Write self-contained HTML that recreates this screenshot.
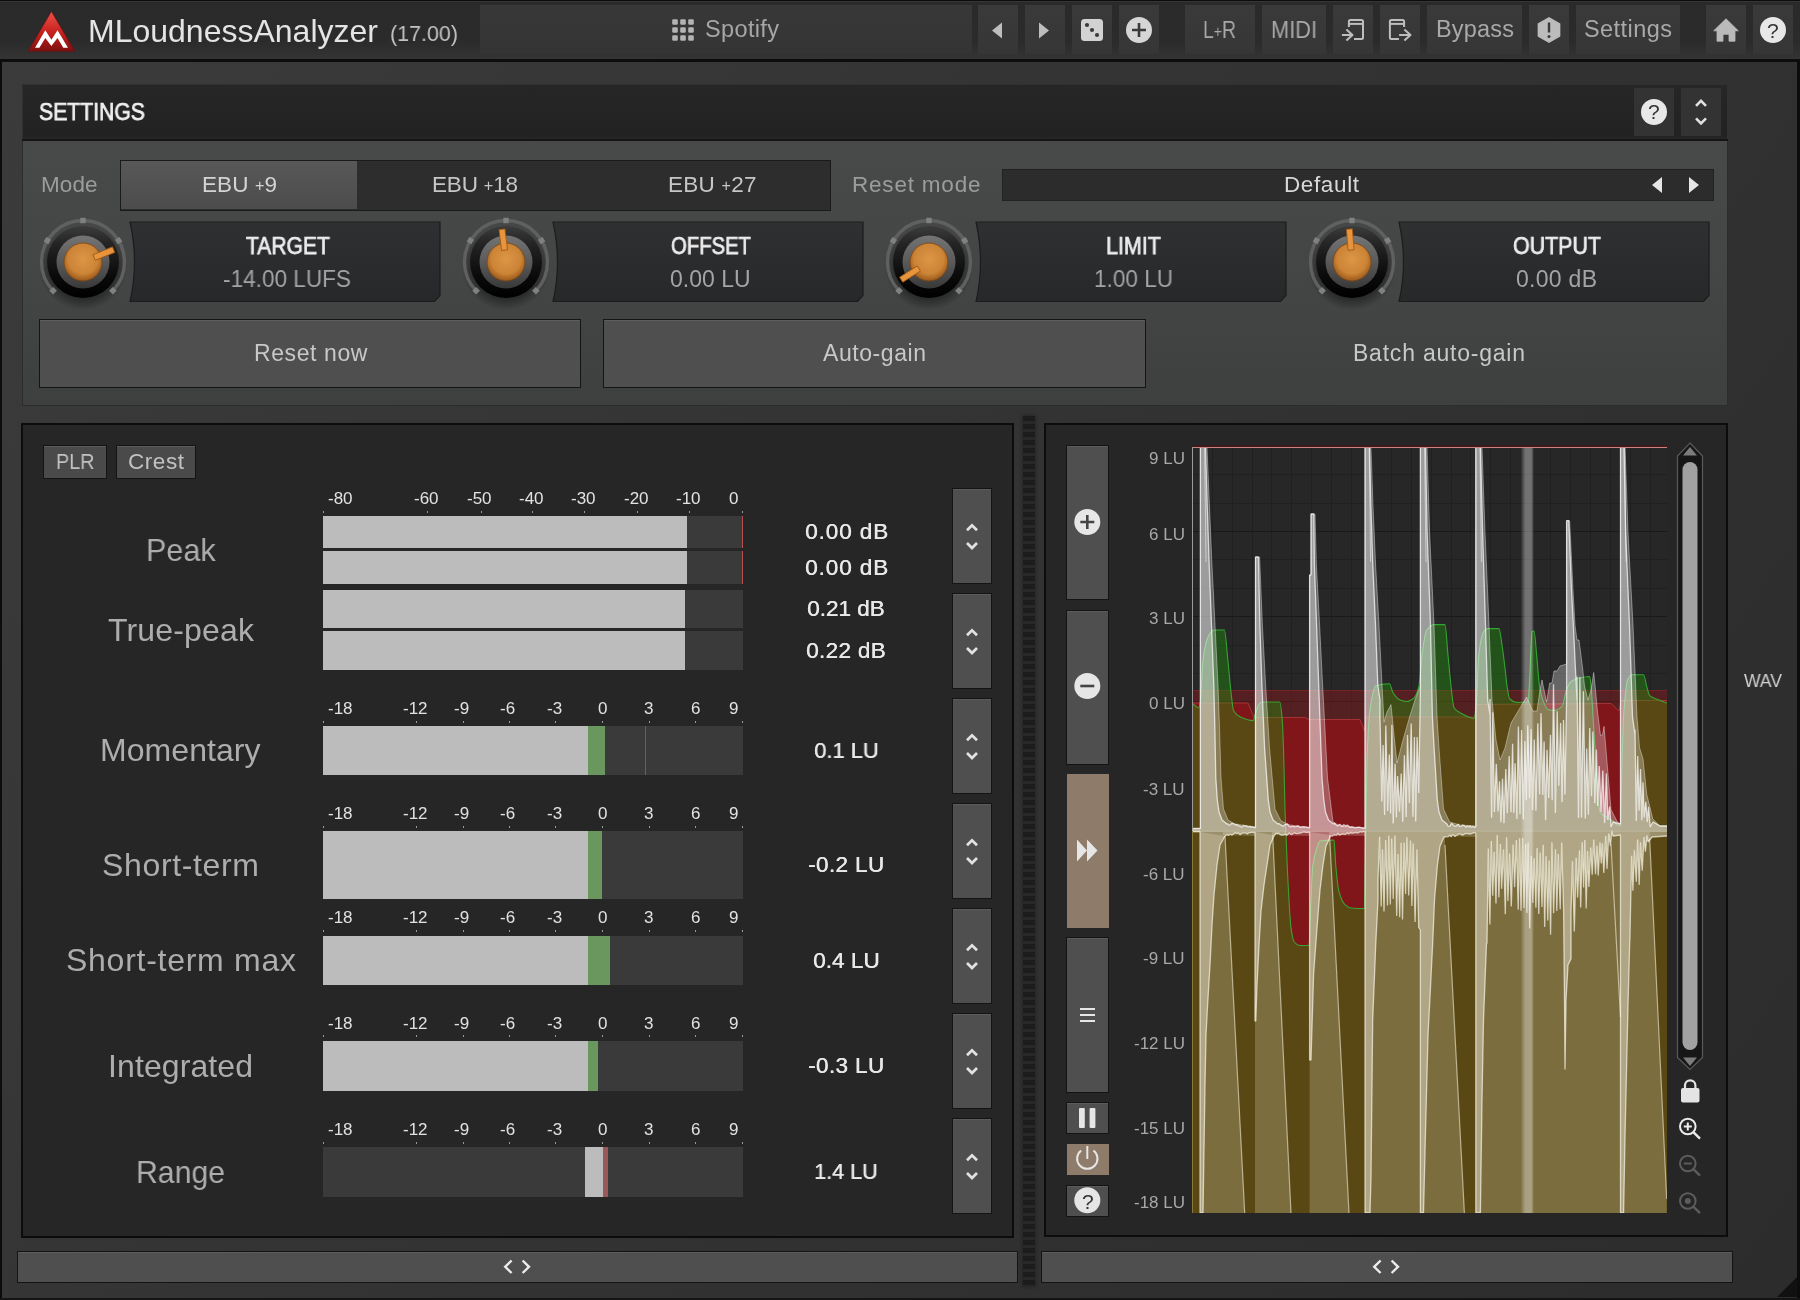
<!DOCTYPE html><html><head><meta charset="utf-8"><title>MLoudnessAnalyzer</title><style>
html,body{margin:0;padding:0}body{width:1800px;height:1300px;position:relative;overflow:hidden;background:#343434;font-family:"Liberation Sans", sans-serif;-webkit-font-smoothing:antialiased;}
body>div{will-change:transform}
.btn{position:absolute;background:#4f4f4f;border:1px solid #141414;box-sizing:border-box;box-shadow:inset 0 1px 0 #5c5c5c}
.tb{position:absolute;top:5px;height:49px;background:linear-gradient(#3a3a3a,#363636)}
</style></head><body>
<div style="position:absolute;left:0.0px;top:0.0px;width:1800.0px;height:1300.0px;background:#0c0c0c;"></div>
<div style="position:absolute;left:2.0px;top:62.0px;width:1795.0px;height:1236.0px;background:linear-gradient(125deg,#3b3b3b 0%,#343434 40%,#2c2c2c 100%);"></div>
<div style="position:absolute;left:0.0px;top:0.0px;width:1800.0px;height:59.0px;background:linear-gradient(#2a2a2a 0%,#2b2b2b 70%,#343434 100%);"></div>
<div style="position:absolute;left:0.0px;top:0.0px;width:1800.0px;height:1.2px;background:#0c0c0c;"></div>
<div style="position:absolute;left:0.0px;top:1.2px;width:1800.0px;height:1.0px;background:#363636;"></div>
<div style="position:absolute;left:0.0px;top:58.6px;width:1800.0px;height:3.4px;background:#0d0d0d;"></div>
<svg style="position:absolute;left:24.0px;top:8.0px" width="56.0" height="48.0" viewBox="0 0 56.0 48.0">
<defs><linearGradient id="lg" x1="0" y1="0" x2="0" y2="1"><stop offset="0" stop-color="#f0504a"/><stop offset="0.55" stop-color="#c4201c"/><stop offset="1" stop-color="#7c1010"/></linearGradient></defs>
<path d="M27.4,3.4 L50.9,43.3 L4.1,43.3 Z" fill="url(#lg)" stroke="#6a0e0e" stroke-width="0.8" stroke-opacity="0.7" stroke-linejoin="round"/>
<path d="M11,39.8 L21.3,22.3 L27.4,31.7 L33.5,22.3 L44,39.8 L39.3,39.8 L33.5,30 L27.4,38.1 L21.3,30 L15.4,39.8 Z" fill="#fff"/>
</svg>
<div style="position:absolute;left:88.0px;top:14.9px;font-size:32.0px;line-height:32.0px;color:#e4e4e4;white-space:nowrap;">MLoudnessAnalyzer</div>
<div style="position:absolute;left:390.0px;top:23.0px;font-size:22.5px;line-height:22.5px;color:#c4c4c4;white-space:nowrap;transform:scaleX(0.9538);transform-origin:0 0;">(17.00)</div>
<div class="tb" style="left:480px;width:492px;background:linear-gradient(#383838,#343434)"></div>
<svg style="position:absolute;left:672.0px;top:19.0px" width="22.0" height="22.0" viewBox="0 0 22.0 22.0">
<rect x="0.2" y="0.2" width="5.6" height="5.6" rx="1.3" fill="#b4b4b4"/>
<rect x="8.2" y="0.2" width="5.6" height="5.6" rx="1.3" fill="#b4b4b4"/>
<rect x="16.2" y="0.2" width="5.6" height="5.6" rx="1.3" fill="#b4b4b4"/>
<rect x="0.2" y="8.2" width="5.6" height="5.6" rx="1.3" fill="#b4b4b4"/>
<rect x="8.2" y="8.2" width="5.6" height="5.6" rx="1.3" fill="#b4b4b4"/>
<rect x="16.2" y="8.2" width="5.6" height="5.6" rx="1.3" fill="#b4b4b4"/>
<rect x="0.2" y="16.2" width="5.6" height="5.6" rx="1.3" fill="#b4b4b4"/>
<rect x="8.2" y="16.2" width="5.6" height="5.6" rx="1.3" fill="#b4b4b4"/>
<rect x="16.2" y="16.2" width="5.6" height="5.6" rx="1.3" fill="#b4b4b4"/>
</svg>
<div style="position:absolute;left:705.0px;top:18.1px;font-size:23.5px;line-height:23.5px;color:#a6a6a6;white-space:nowrap;letter-spacing:0.36px;">Spotify</div>
<div class="tb" style="left:978px;width:40px"></div>
<div class="tb" style="left:1025px;width:40px"></div>
<div class="tb" style="left:1072px;width:40px"></div>
<div class="tb" style="left:1119px;width:40px"></div>
<div class="tb" style="left:1185px;width:70px"></div>
<div class="tb" style="left:1262px;width:64px"></div>
<div class="tb" style="left:1333px;width:40px"></div>
<div class="tb" style="left:1380px;width:40px"></div>
<div class="tb" style="left:1427px;width:95px"></div>
<div class="tb" style="left:1529px;width:40px"></div>
<div class="tb" style="left:1576px;width:104px"></div>
<div class="tb" style="left:1706px;width:40px"></div>
<div class="tb" style="left:1753px;width:40px"></div>
<svg style="position:absolute;left:978.0px;top:5.0px" width="815.0" height="49.0" viewBox="0 0 815.0 49.0">
<path d="M24,17.5 L24,33.5 L14,25.5 Z" fill="#bebebe"/>
<path d="M61,17.5 L61,33.5 L71,25.5 Z" fill="#bebebe"/>
<rect x="103" y="14" width="22" height="22" rx="3.5" fill="#d2d2d2"/>
<circle cx="109" cy="20" r="2.1" fill="#3a3a3a"/><circle cx="114" cy="25" r="2.1" fill="#3a3a3a"/><circle cx="119" cy="30" r="2.1" fill="#3a3a3a"/>
<circle cx="161" cy="25" r="13" fill="#d6d6d6"/><path d="M161,18 V32 M154,25 H168" stroke="#3a3a3a" stroke-width="2.6"/>
<g fill="none" stroke="#bebebe" stroke-width="2" stroke-linejoin="round">
<path d="M370.9,21.9 V16.5 Q370.9,15 372.4,15 H383.5 Q385,15 385,16.5 V32.5 Q385,34 383.5,34 H376"/><path d="M370.9,18.9 H385"/><path d="M363.9,30 H374.2 M368.4,24.5 L374.5,30 L368.4,35.6"/>
<path d="M426.1,21.9 V16.5 Q426.1,15 424.6,15 H413.4 Q411.9,15 411.9,16.5 V32.5 Q411.9,34 413.4,34 H420.9"/><path d="M411.9,18.9 H426.1"/><path d="M421.1,30 H432.2 M426.4,24.5 L432.5,30 L426.4,35.6"/>
</g>
<path d="M571.0,12.8 L581.6,18.9 L581.6,31.1 L571.0,37.2 L560.4,31.1 L560.4,18.9 Z" fill="#bcbcbc" stroke="#bcbcbc" stroke-width="1.5" stroke-linejoin="round"/>
<path d="M571,17.5 V27.5" stroke="#3a3a3a" stroke-width="2.4"/><circle cx="571" cy="31.5" r="1.5" fill="#3a3a3a"/>
<path d="M748,13.8 L760.3,25.8 H757 V36.2 H751 V29.3 H745 V36.2 H739 V25.8 H735.7 Z" fill="#bababa" stroke="#bababa" stroke-width="0.8" stroke-linejoin="round"/>
<circle cx="795" cy="25" r="13" fill="#e8e8e8"/>
</svg>
<div style="position:absolute;left:1767.2px;top:19.8px;font-size:21.0px;line-height:21.0px;color:#333;white-space:nowrap;">?</div>
<div style="position:absolute;left:1203.0px;top:18.5px;font-size:23.0px;line-height:23.0px;color:#a9a9a9;white-space:nowrap;transform:scaleX(0.8446);transform-origin:0 0;">L<span style="font-size:0.72em;position:relative;top:-0.07em">+</span>R</div>
<div style="position:absolute;left:1271.0px;top:18.5px;font-size:23.0px;line-height:23.0px;color:#a9a9a9;white-space:nowrap;transform:scaleX(0.9475);transform-origin:0 0;">MIDI</div>
<div style="position:absolute;left:1436.0px;top:18.1px;font-size:23.5px;line-height:23.5px;color:#a9a9a9;white-space:nowrap;letter-spacing:0.19px;">Bypass</div>
<div style="position:absolute;left:1584.0px;top:18.1px;font-size:23.5px;line-height:23.5px;color:#a9a9a9;white-space:nowrap;letter-spacing:0.44px;">Settings</div>
<div style="position:absolute;left:22.0px;top:84.0px;width:1706.0px;height:56.0px;background:#262626;border:1px solid #313131;box-sizing:border-box;"></div>
<div style="position:absolute;left:23.0px;top:88.0px;width:1704.0px;height:49.0px;background:linear-gradient(#262626,#222222);"></div>
<div style="position:absolute;left:22.0px;top:139.0px;width:1706.0px;height:2.0px;background:#151515;"></div>
<div style="position:absolute;left:22.0px;top:141.0px;width:1706.0px;height:265.0px;background:linear-gradient(180deg,#484a4a 0%,#444646 50%,#3e3f3f 100%);border:1px solid #2c2c2c;border-top:none;box-sizing:border-box;"></div>
<div style="position:absolute;left:39.0px;top:101.1px;font-size:23.5px;line-height:23.5px;color:#f0f0f0;white-space:nowrap;-webkit-text-stroke:0.75px #f0f0f0;transform:scaleX(0.9020);transform-origin:0 0;">SETTINGS</div>
<div style="position:absolute;left:1634.0px;top:88.0px;width:40.0px;height:48.0px;background:#333333;"></div>
<div style="position:absolute;left:1681.0px;top:88.0px;width:40.0px;height:48.0px;background:#333333;"></div>
<svg style="position:absolute;left:1634.0px;top:88.0px" width="90.0" height="48.0" viewBox="0 0 90.0 48.0">
<circle cx="20" cy="24" r="13" fill="#e8e8e8"/>
<path d="M62,17.8 L67,12.8 L72,17.8 M62,30.4 L67,35.4 L72,30.4" fill="none" stroke="#e0e0e0" stroke-width="2.6"/>
</svg>
<div style="position:absolute;left:1648.2px;top:101.4px;font-size:21.0px;line-height:21.0px;color:#333;white-space:nowrap;">?</div>
<div style="position:absolute;left:41.0px;top:174.0px;font-size:22.5px;line-height:22.5px;color:#9c9c9c;white-space:nowrap;letter-spacing:0.07px;">Mode</div>
<div style="position:absolute;left:119.5px;top:159.5px;width:711.0px;height:51.0px;background:#2d2d2d;border:1px solid #1a1a1a;box-sizing:border-box;"></div>
<div style="position:absolute;left:121.0px;top:161.0px;width:236.0px;height:48.0px;background:linear-gradient(#585858,#4c4c4c);"></div>
<div style="position:absolute;left:201.5px;top:174.0px;font-size:22.5px;line-height:22.5px;color:#d4d4d4;white-space:nowrap;letter-spacing:0.10px;">EBU <span style="font-size:0.72em;position:relative;top:-0.07em">+</span>9</div>
<div style="position:absolute;left:432.3px;top:174.0px;font-size:22.5px;line-height:22.5px;color:#c6c6c6;white-space:nowrap;letter-spacing:-0.17px;">EBU <span style="font-size:0.72em;position:relative;top:-0.07em">+</span>18</div>
<div style="position:absolute;left:667.5px;top:174.0px;font-size:22.5px;line-height:22.5px;color:#c6c6c6;white-space:nowrap;letter-spacing:0.25px;">EBU <span style="font-size:0.72em;position:relative;top:-0.07em">+</span>27</div>
<div style="position:absolute;left:852.4px;top:174.0px;font-size:22.5px;line-height:22.5px;color:#9c9c9c;white-space:nowrap;letter-spacing:0.80px;">Reset mode</div>
<div style="position:absolute;left:1002.0px;top:169.0px;width:711.5px;height:32.0px;background:#2c2c2c;border:1px solid #222;box-sizing:border-box;"></div>
<div style="position:absolute;left:1284.0px;top:174.0px;font-size:22.5px;line-height:22.5px;color:#d8d8d8;white-space:nowrap;letter-spacing:0.62px;">Default</div>
<svg style="position:absolute;left:1645.0px;top:172.0px" width="60.0" height="26.0" viewBox="0 0 60.0 26.0">
<path d="M17,5 V21 L7,13 Z M44,5 V21 L54,13 Z" fill="#e6e6e6"/>
</svg>
<svg style="position:absolute;left:128.0px;top:220.0px" width="316.0" height="84.0" viewBox="0 0 316.0 84.0">
<defs><linearGradient id="v130" x1="0" y1="0" x2="0" y2="1"><stop offset="0" stop-color="#2f3032"/><stop offset="1" stop-color="#27282a"/></linearGradient></defs>
<path d="M2,2 H312 V75.5 L306.5,81.5 H2 Q11,42 2,2 Z" fill="url(#v130)" stroke="#1c1c1c" stroke-width="1.2"/>
</svg>
<div style="position:absolute;left:245.5px;top:235.1px;font-size:23.5px;line-height:23.5px;color:#ececec;white-space:nowrap;-webkit-text-stroke:0.75px #ececec;transform:scaleX(0.8960);transform-origin:0 0;">TARGET</div>
<div style="position:absolute;left:223.0px;top:267.5px;font-size:23.0px;line-height:23.0px;color:#a4a4a4;white-space:nowrap;transform:scaleX(0.9816);transform-origin:0 0;">-14.00 LUFS</div>
<svg style="position:absolute;left:33.0px;top:212.0px" width="100.0" height="100.0" viewBox="0 0 100.0 100.0">
<defs><radialGradient id="k83a" cx="0.5" cy="0.42" r="0.6"><stop offset="0" stop-color="#dc9646"/><stop offset="0.65" stop-color="#cc8436"/><stop offset="1" stop-color="#945418"/></radialGradient>
<linearGradient id="k83b" x1="0" y1="0" x2="0" y2="1"><stop offset="0" stop-color="#3c3c3c"/><stop offset="0.25" stop-color="#242424"/><stop offset="0.7" stop-color="#0a0a0a"/><stop offset="1" stop-color="#000"/></linearGradient>
<linearGradient id="k83c" x1="0" y1="0" x2="0" y2="1"><stop offset="0" stop-color="#747474"/><stop offset="0.5" stop-color="#5a5a5a"/><stop offset="1" stop-color="#383838"/></linearGradient>
<radialGradient id="k83d" cx="0.5" cy="0.5" r="0.5"><stop offset="0.6" stop-color="#000" stop-opacity="0.55"/><stop offset="1" stop-color="#000" stop-opacity="0"/></radialGradient></defs>
<ellipse cx="50" cy="56" rx="44" ry="42" fill="url(#k83d)"/>
<path d="M20.1,78.8 A41.5,41.5 0 1 1 79.9,78.8" fill="none" stroke="#606060" stroke-width="3.3"/>
<rect x="17.4" y="76.1" width="5.4" height="5.4" fill="#808080" transform="rotate(-134 20.1 78.8)"/>
<rect x="11.7" y="25.9" width="5.4" height="5.4" fill="#808080" transform="rotate(-59 14.4 28.6)"/>
<rect x="47.3" y="5.8" width="5.4" height="5.4" fill="#808080" transform="rotate(0 50.0 8.5)"/>
<rect x="82.9" y="25.9" width="5.4" height="5.4" fill="#808080" transform="rotate(59 85.6 28.6)"/>
<rect x="77.2" y="76.1" width="5.4" height="5.4" fill="#808080" transform="rotate(134 79.9 78.8)"/>
<circle cx="50" cy="50" r="36" fill="url(#k83b)"/>
<circle cx="50" cy="50" r="26.5" fill="url(#k83c)"/>
<circle cx="50" cy="50" r="19" fill="url(#k83a)" stroke="#7a4412" stroke-width="0.8"/>
<rect x="47" y="17" width="6" height="21" fill="#e8943c" stroke="#9a5614" stroke-width="0.8" transform="rotate(68.0 50 50)"/>
</svg>
<svg style="position:absolute;left:551.0px;top:220.0px" width="316.0" height="84.0" viewBox="0 0 316.0 84.0">
<defs><linearGradient id="v553" x1="0" y1="0" x2="0" y2="1"><stop offset="0" stop-color="#2f3032"/><stop offset="1" stop-color="#27282a"/></linearGradient></defs>
<path d="M2,2 H312 V75.5 L306.5,81.5 H2 Q11,42 2,2 Z" fill="url(#v553)" stroke="#1c1c1c" stroke-width="1.2"/>
</svg>
<div style="position:absolute;left:671.0px;top:235.1px;font-size:23.5px;line-height:23.5px;color:#ececec;white-space:nowrap;-webkit-text-stroke:0.75px #ececec;transform:scaleX(0.8630);transform-origin:0 0;">OFFSET</div>
<div style="position:absolute;left:669.8px;top:267.5px;font-size:23.0px;line-height:23.0px;color:#a4a4a4;white-space:nowrap;">0.00 LU</div>
<svg style="position:absolute;left:456.0px;top:212.0px" width="100.0" height="100.0" viewBox="0 0 100.0 100.0">
<defs><radialGradient id="k506a" cx="0.5" cy="0.42" r="0.6"><stop offset="0" stop-color="#dc9646"/><stop offset="0.65" stop-color="#cc8436"/><stop offset="1" stop-color="#945418"/></radialGradient>
<linearGradient id="k506b" x1="0" y1="0" x2="0" y2="1"><stop offset="0" stop-color="#3c3c3c"/><stop offset="0.25" stop-color="#242424"/><stop offset="0.7" stop-color="#0a0a0a"/><stop offset="1" stop-color="#000"/></linearGradient>
<linearGradient id="k506c" x1="0" y1="0" x2="0" y2="1"><stop offset="0" stop-color="#747474"/><stop offset="0.5" stop-color="#5a5a5a"/><stop offset="1" stop-color="#383838"/></linearGradient>
<radialGradient id="k506d" cx="0.5" cy="0.5" r="0.5"><stop offset="0.6" stop-color="#000" stop-opacity="0.55"/><stop offset="1" stop-color="#000" stop-opacity="0"/></radialGradient></defs>
<ellipse cx="50" cy="56" rx="44" ry="42" fill="url(#k506d)"/>
<path d="M20.1,78.8 A41.5,41.5 0 1 1 79.9,78.8" fill="none" stroke="#606060" stroke-width="3.3"/>
<rect x="17.4" y="76.1" width="5.4" height="5.4" fill="#808080" transform="rotate(-134 20.1 78.8)"/>
<rect x="11.7" y="25.9" width="5.4" height="5.4" fill="#808080" transform="rotate(-59 14.4 28.6)"/>
<rect x="47.3" y="5.8" width="5.4" height="5.4" fill="#808080" transform="rotate(0 50.0 8.5)"/>
<rect x="82.9" y="25.9" width="5.4" height="5.4" fill="#808080" transform="rotate(59 85.6 28.6)"/>
<rect x="77.2" y="76.1" width="5.4" height="5.4" fill="#808080" transform="rotate(134 79.9 78.8)"/>
<circle cx="50" cy="50" r="36" fill="url(#k506b)"/>
<circle cx="50" cy="50" r="26.5" fill="url(#k506c)"/>
<circle cx="50" cy="50" r="19" fill="url(#k506a)" stroke="#7a4412" stroke-width="0.8"/>
<rect x="47" y="17" width="6" height="21" fill="#e8943c" stroke="#9a5614" stroke-width="0.8" transform="rotate(-7.0 50 50)"/>
</svg>
<svg style="position:absolute;left:974.0px;top:220.0px" width="316.0" height="84.0" viewBox="0 0 316.0 84.0">
<defs><linearGradient id="v976" x1="0" y1="0" x2="0" y2="1"><stop offset="0" stop-color="#2f3032"/><stop offset="1" stop-color="#27282a"/></linearGradient></defs>
<path d="M2,2 H312 V75.5 L306.5,81.5 H2 Q11,42 2,2 Z" fill="url(#v976)" stroke="#1c1c1c" stroke-width="1.2"/>
</svg>
<div style="position:absolute;left:1106.0px;top:235.1px;font-size:23.5px;line-height:23.5px;color:#ececec;white-space:nowrap;-webkit-text-stroke:0.75px #ececec;transform:scaleX(0.9129);transform-origin:0 0;">LIMIT</div>
<div style="position:absolute;left:1093.5px;top:267.5px;font-size:23.0px;line-height:23.0px;color:#a4a4a4;white-space:nowrap;transform:scaleX(0.9807);transform-origin:0 0;">1.00 LU</div>
<svg style="position:absolute;left:879.0px;top:212.0px" width="100.0" height="100.0" viewBox="0 0 100.0 100.0">
<defs><radialGradient id="k929a" cx="0.5" cy="0.42" r="0.6"><stop offset="0" stop-color="#dc9646"/><stop offset="0.65" stop-color="#cc8436"/><stop offset="1" stop-color="#945418"/></radialGradient>
<linearGradient id="k929b" x1="0" y1="0" x2="0" y2="1"><stop offset="0" stop-color="#3c3c3c"/><stop offset="0.25" stop-color="#242424"/><stop offset="0.7" stop-color="#0a0a0a"/><stop offset="1" stop-color="#000"/></linearGradient>
<linearGradient id="k929c" x1="0" y1="0" x2="0" y2="1"><stop offset="0" stop-color="#747474"/><stop offset="0.5" stop-color="#5a5a5a"/><stop offset="1" stop-color="#383838"/></linearGradient>
<radialGradient id="k929d" cx="0.5" cy="0.5" r="0.5"><stop offset="0.6" stop-color="#000" stop-opacity="0.55"/><stop offset="1" stop-color="#000" stop-opacity="0"/></radialGradient></defs>
<ellipse cx="50" cy="56" rx="44" ry="42" fill="url(#k929d)"/>
<path d="M20.1,78.8 A41.5,41.5 0 1 1 79.9,78.8" fill="none" stroke="#606060" stroke-width="3.3"/>
<rect x="17.4" y="76.1" width="5.4" height="5.4" fill="#808080" transform="rotate(-134 20.1 78.8)"/>
<rect x="11.7" y="25.9" width="5.4" height="5.4" fill="#808080" transform="rotate(-59 14.4 28.6)"/>
<rect x="47.3" y="5.8" width="5.4" height="5.4" fill="#808080" transform="rotate(0 50.0 8.5)"/>
<rect x="82.9" y="25.9" width="5.4" height="5.4" fill="#808080" transform="rotate(59 85.6 28.6)"/>
<rect x="77.2" y="76.1" width="5.4" height="5.4" fill="#808080" transform="rotate(134 79.9 78.8)"/>
<circle cx="50" cy="50" r="36" fill="url(#k929b)"/>
<circle cx="50" cy="50" r="26.5" fill="url(#k929c)"/>
<circle cx="50" cy="50" r="19" fill="url(#k929a)" stroke="#7a4412" stroke-width="0.8"/>
<rect x="47" y="17" width="6" height="21" fill="#e8943c" stroke="#9a5614" stroke-width="0.8" transform="rotate(-122.5 50 50)"/>
</svg>
<svg style="position:absolute;left:1397.0px;top:220.0px" width="316.0" height="84.0" viewBox="0 0 316.0 84.0">
<defs><linearGradient id="v1399" x1="0" y1="0" x2="0" y2="1"><stop offset="0" stop-color="#2f3032"/><stop offset="1" stop-color="#27282a"/></linearGradient></defs>
<path d="M2,2 H312 V75.5 L306.5,81.5 H2 Q11,42 2,2 Z" fill="url(#v1399)" stroke="#1c1c1c" stroke-width="1.2"/>
</svg>
<div style="position:absolute;left:1513.0px;top:235.1px;font-size:23.5px;line-height:23.5px;color:#ececec;white-space:nowrap;-webkit-text-stroke:0.75px #ececec;transform:scaleX(0.9109);transform-origin:0 0;">OUTPUT</div>
<div style="position:absolute;left:1515.5px;top:267.5px;font-size:23.0px;line-height:23.0px;color:#a4a4a4;white-space:nowrap;letter-spacing:0.29px;">0.00 dB</div>
<svg style="position:absolute;left:1302.0px;top:212.0px" width="100.0" height="100.0" viewBox="0 0 100.0 100.0">
<defs><radialGradient id="k1352a" cx="0.5" cy="0.42" r="0.6"><stop offset="0" stop-color="#dc9646"/><stop offset="0.65" stop-color="#cc8436"/><stop offset="1" stop-color="#945418"/></radialGradient>
<linearGradient id="k1352b" x1="0" y1="0" x2="0" y2="1"><stop offset="0" stop-color="#3c3c3c"/><stop offset="0.25" stop-color="#242424"/><stop offset="0.7" stop-color="#0a0a0a"/><stop offset="1" stop-color="#000"/></linearGradient>
<linearGradient id="k1352c" x1="0" y1="0" x2="0" y2="1"><stop offset="0" stop-color="#747474"/><stop offset="0.5" stop-color="#5a5a5a"/><stop offset="1" stop-color="#383838"/></linearGradient>
<radialGradient id="k1352d" cx="0.5" cy="0.5" r="0.5"><stop offset="0.6" stop-color="#000" stop-opacity="0.55"/><stop offset="1" stop-color="#000" stop-opacity="0"/></radialGradient></defs>
<ellipse cx="50" cy="56" rx="44" ry="42" fill="url(#k1352d)"/>
<path d="M20.1,78.8 A41.5,41.5 0 1 1 79.9,78.8" fill="none" stroke="#606060" stroke-width="3.3"/>
<rect x="17.4" y="76.1" width="5.4" height="5.4" fill="#808080" transform="rotate(-134 20.1 78.8)"/>
<rect x="11.7" y="25.9" width="5.4" height="5.4" fill="#808080" transform="rotate(-59 14.4 28.6)"/>
<rect x="47.3" y="5.8" width="5.4" height="5.4" fill="#808080" transform="rotate(0 50.0 8.5)"/>
<rect x="82.9" y="25.9" width="5.4" height="5.4" fill="#808080" transform="rotate(59 85.6 28.6)"/>
<rect x="77.2" y="76.1" width="5.4" height="5.4" fill="#808080" transform="rotate(134 79.9 78.8)"/>
<circle cx="50" cy="50" r="36" fill="url(#k1352b)"/>
<circle cx="50" cy="50" r="26.5" fill="url(#k1352c)"/>
<circle cx="50" cy="50" r="19" fill="url(#k1352a)" stroke="#7a4412" stroke-width="0.8"/>
<rect x="47" y="17" width="6" height="21" fill="#e8943c" stroke="#9a5614" stroke-width="0.8" transform="rotate(-4.5 50 50)"/>
</svg>
<div class="btn" style="left:39px;top:318.5px;width:542px;height:69px"></div>
<div class="btn" style="left:603px;top:318.5px;width:543px;height:69px"></div>
<div style="position:absolute;left:253.8px;top:341.5px;font-size:23.0px;line-height:23.0px;color:#c8c8c8;white-space:nowrap;letter-spacing:0.60px;">Reset now</div>
<div style="position:absolute;left:823.0px;top:341.5px;font-size:23.0px;line-height:23.0px;color:#c8c8c8;white-space:nowrap;letter-spacing:0.57px;">Auto-gain</div>
<div style="position:absolute;left:1353.0px;top:341.5px;font-size:23.0px;line-height:23.0px;color:#c8c8c8;white-space:nowrap;letter-spacing:0.78px;">Batch auto-gain</div>
<div style="position:absolute;left:21.0px;top:423.0px;width:993.0px;height:815.0px;background:#262626;border:2px solid #0c0c0c;box-sizing:border-box;"></div>
<div class="btn" style="left:43px;top:444.6px;width:64px;height:34.2px;background:#4a4a4a"></div>
<div class="btn" style="left:116px;top:444.6px;width:80px;height:34.2px;background:#4a4a4a"></div>
<div style="position:absolute;left:56.0px;top:451.0px;font-size:22.5px;line-height:22.5px;color:#c2c2c2;white-space:nowrap;transform:scaleX(0.8796);transform-origin:0 0;">PLR</div>
<div style="position:absolute;left:128.0px;top:451.0px;font-size:22.5px;line-height:22.5px;color:#c2c2c2;white-space:nowrap;letter-spacing:0.56px;">Crest</div>
<div style="position:absolute;left:145.7px;top:533.9px;font-size:32.0px;line-height:32.0px;color:#adadad;white-space:nowrap;transform:scaleX(0.9542);transform-origin:0 0;">Peak</div>
<div style="position:absolute;left:107.5px;top:613.9px;font-size:32.0px;line-height:32.0px;color:#adadad;white-space:nowrap;letter-spacing:0.17px;">True-peak</div>
<div style="position:absolute;left:100.2px;top:733.9px;font-size:32.0px;line-height:32.0px;color:#adadad;white-space:nowrap;letter-spacing:0.06px;">Momentary</div>
<div style="position:absolute;left:102.0px;top:848.9px;font-size:32.0px;line-height:32.0px;color:#adadad;white-space:nowrap;letter-spacing:0.65px;">Short-term</div>
<div style="position:absolute;left:65.5px;top:944.4px;font-size:32.0px;line-height:32.0px;color:#adadad;white-space:nowrap;letter-spacing:0.73px;">Short-term max</div>
<div style="position:absolute;left:108.0px;top:1049.9px;font-size:32.0px;line-height:32.0px;color:#adadad;white-space:nowrap;letter-spacing:0.10px;">Integrated</div>
<div style="position:absolute;left:136.0px;top:1155.9px;font-size:32.0px;line-height:32.0px;color:#adadad;white-space:nowrap;transform:scaleX(0.9438);transform-origin:0 0;">Range</div>
<div style="position:absolute;left:327.5px;top:490.2px;font-size:17.0px;line-height:17.0px;color:#e2e2e2;white-space:nowrap;">-80</div>
<div style="position:absolute;left:323.0px;top:510.8px;width:1.0px;height:2.4px;background:#9a9a9a;"></div>
<div style="position:absolute;left:413.9px;top:490.2px;font-size:17.0px;line-height:17.0px;color:#e2e2e2;white-space:nowrap;">-60</div>
<div style="position:absolute;left:427.4px;top:510.8px;width:1.0px;height:2.4px;background:#9a9a9a;"></div>
<div style="position:absolute;left:467.0px;top:490.2px;font-size:17.0px;line-height:17.0px;color:#e2e2e2;white-space:nowrap;">-50</div>
<div style="position:absolute;left:480.5px;top:510.8px;width:1.0px;height:2.4px;background:#9a9a9a;"></div>
<div style="position:absolute;left:518.8px;top:490.2px;font-size:17.0px;line-height:17.0px;color:#e2e2e2;white-space:nowrap;">-40</div>
<div style="position:absolute;left:532.3px;top:510.8px;width:1.0px;height:2.4px;background:#9a9a9a;"></div>
<div style="position:absolute;left:570.8px;top:490.2px;font-size:17.0px;line-height:17.0px;color:#e2e2e2;white-space:nowrap;">-30</div>
<div style="position:absolute;left:584.3px;top:510.8px;width:1.0px;height:2.4px;background:#9a9a9a;"></div>
<div style="position:absolute;left:623.9px;top:490.2px;font-size:17.0px;line-height:17.0px;color:#e2e2e2;white-space:nowrap;">-20</div>
<div style="position:absolute;left:637.4px;top:510.8px;width:1.0px;height:2.4px;background:#9a9a9a;"></div>
<div style="position:absolute;left:675.7px;top:490.2px;font-size:17.0px;line-height:17.0px;color:#e2e2e2;white-space:nowrap;">-10</div>
<div style="position:absolute;left:689.2px;top:510.8px;width:1.0px;height:2.4px;background:#9a9a9a;"></div>
<div style="position:absolute;left:729.3px;top:490.2px;font-size:17.0px;line-height:17.0px;color:#e2e2e2;white-space:nowrap;">0</div>
<div style="position:absolute;left:742.3px;top:510.8px;width:1.0px;height:2.4px;background:#9a9a9a;"></div>
<div style="position:absolute;left:323.0px;top:516.0px;width:420.0px;height:32.0px;background:#3a3a3a;"></div>
<div style="position:absolute;left:323.0px;top:516.0px;width:364.2px;height:32.0px;background:#bcbcbc;"></div>
<div style="position:absolute;left:742.0px;top:516.0px;width:1.0px;height:32.0px;background:#b85050;"></div>
<div style="position:absolute;left:323.0px;top:551.0px;width:420.0px;height:33.0px;background:#3a3a3a;"></div>
<div style="position:absolute;left:323.0px;top:551.0px;width:364.2px;height:33.0px;background:#bcbcbc;"></div>
<div style="position:absolute;left:742.0px;top:551.0px;width:1.0px;height:33.0px;background:#b85050;"></div>
<div style="position:absolute;left:323.0px;top:590.0px;width:420.0px;height:38.0px;background:#3a3a3a;"></div>
<div style="position:absolute;left:323.0px;top:590.0px;width:362.0px;height:38.0px;background:#bcbcbc;"></div>
<div style="position:absolute;left:323.0px;top:631.0px;width:420.0px;height:39.0px;background:#3a3a3a;"></div>
<div style="position:absolute;left:323.0px;top:631.0px;width:362.0px;height:39.0px;background:#bcbcbc;"></div>
<div style="position:absolute;left:327.5px;top:700.2px;font-size:17.0px;line-height:17.0px;color:#e2e2e2;white-space:nowrap;">-18</div>
<div style="position:absolute;left:323.0px;top:720.8px;width:1.0px;height:2.4px;background:#9a9a9a;"></div>
<div style="position:absolute;left:402.8px;top:700.2px;font-size:17.0px;line-height:17.0px;color:#e2e2e2;white-space:nowrap;">-12</div>
<div style="position:absolute;left:416.3px;top:720.8px;width:1.0px;height:2.4px;background:#9a9a9a;"></div>
<div style="position:absolute;left:453.8px;top:700.2px;font-size:17.0px;line-height:17.0px;color:#e2e2e2;white-space:nowrap;">-9</div>
<div style="position:absolute;left:462.6px;top:720.8px;width:1.0px;height:2.4px;background:#9a9a9a;"></div>
<div style="position:absolute;left:500.2px;top:700.2px;font-size:17.0px;line-height:17.0px;color:#e2e2e2;white-space:nowrap;">-6</div>
<div style="position:absolute;left:509.0px;top:720.8px;width:1.0px;height:2.4px;background:#9a9a9a;"></div>
<div style="position:absolute;left:546.6px;top:700.2px;font-size:17.0px;line-height:17.0px;color:#e2e2e2;white-space:nowrap;">-3</div>
<div style="position:absolute;left:555.4px;top:720.8px;width:1.0px;height:2.4px;background:#9a9a9a;"></div>
<div style="position:absolute;left:597.6px;top:700.2px;font-size:17.0px;line-height:17.0px;color:#e2e2e2;white-space:nowrap;">0</div>
<div style="position:absolute;left:602.3px;top:720.8px;width:1.0px;height:2.4px;background:#9a9a9a;"></div>
<div style="position:absolute;left:643.8px;top:700.2px;font-size:17.0px;line-height:17.0px;color:#e2e2e2;white-space:nowrap;">3</div>
<div style="position:absolute;left:648.5px;top:720.8px;width:1.0px;height:2.4px;background:#9a9a9a;"></div>
<div style="position:absolute;left:690.7px;top:700.2px;font-size:17.0px;line-height:17.0px;color:#e2e2e2;white-space:nowrap;">6</div>
<div style="position:absolute;left:695.4px;top:720.8px;width:1.0px;height:2.4px;background:#9a9a9a;"></div>
<div style="position:absolute;left:729.3px;top:700.2px;font-size:17.0px;line-height:17.0px;color:#e2e2e2;white-space:nowrap;">9</div>
<div style="position:absolute;left:742.3px;top:720.8px;width:1.0px;height:2.4px;background:#9a9a9a;"></div>
<div style="position:absolute;left:323.0px;top:726.0px;width:420.0px;height:49.0px;background:#3a3a3a;"></div>
<div style="position:absolute;left:323.0px;top:726.0px;width:265.0px;height:49.0px;background:#bcbcbc;"></div>
<div style="position:absolute;left:588.0px;top:726.0px;width:17.0px;height:49.0px;background:#6a975e;"></div>
<div style="position:absolute;left:645.0px;top:726.0px;width:1.0px;height:49.0px;background:#a04848;"></div>
<div style="position:absolute;left:327.5px;top:805.1px;font-size:17.0px;line-height:17.0px;color:#e2e2e2;white-space:nowrap;">-18</div>
<div style="position:absolute;left:323.0px;top:825.7px;width:1.0px;height:2.4px;background:#9a9a9a;"></div>
<div style="position:absolute;left:402.8px;top:805.1px;font-size:17.0px;line-height:17.0px;color:#e2e2e2;white-space:nowrap;">-12</div>
<div style="position:absolute;left:416.3px;top:825.7px;width:1.0px;height:2.4px;background:#9a9a9a;"></div>
<div style="position:absolute;left:453.8px;top:805.1px;font-size:17.0px;line-height:17.0px;color:#e2e2e2;white-space:nowrap;">-9</div>
<div style="position:absolute;left:462.6px;top:825.7px;width:1.0px;height:2.4px;background:#9a9a9a;"></div>
<div style="position:absolute;left:500.2px;top:805.1px;font-size:17.0px;line-height:17.0px;color:#e2e2e2;white-space:nowrap;">-6</div>
<div style="position:absolute;left:509.0px;top:825.7px;width:1.0px;height:2.4px;background:#9a9a9a;"></div>
<div style="position:absolute;left:546.6px;top:805.1px;font-size:17.0px;line-height:17.0px;color:#e2e2e2;white-space:nowrap;">-3</div>
<div style="position:absolute;left:555.4px;top:825.7px;width:1.0px;height:2.4px;background:#9a9a9a;"></div>
<div style="position:absolute;left:597.6px;top:805.1px;font-size:17.0px;line-height:17.0px;color:#e2e2e2;white-space:nowrap;">0</div>
<div style="position:absolute;left:602.3px;top:825.7px;width:1.0px;height:2.4px;background:#9a9a9a;"></div>
<div style="position:absolute;left:643.8px;top:805.1px;font-size:17.0px;line-height:17.0px;color:#e2e2e2;white-space:nowrap;">3</div>
<div style="position:absolute;left:648.5px;top:825.7px;width:1.0px;height:2.4px;background:#9a9a9a;"></div>
<div style="position:absolute;left:690.7px;top:805.1px;font-size:17.0px;line-height:17.0px;color:#e2e2e2;white-space:nowrap;">6</div>
<div style="position:absolute;left:695.4px;top:825.7px;width:1.0px;height:2.4px;background:#9a9a9a;"></div>
<div style="position:absolute;left:729.3px;top:805.1px;font-size:17.0px;line-height:17.0px;color:#e2e2e2;white-space:nowrap;">9</div>
<div style="position:absolute;left:742.3px;top:825.7px;width:1.0px;height:2.4px;background:#9a9a9a;"></div>
<div style="position:absolute;left:323.0px;top:831.0px;width:420.0px;height:68.0px;background:#3a3a3a;"></div>
<div style="position:absolute;left:323.0px;top:831.0px;width:265.0px;height:68.0px;background:#bcbcbc;"></div>
<div style="position:absolute;left:588.0px;top:831.0px;width:14.3px;height:68.0px;background:#6a975e;"></div>
<div style="position:absolute;left:327.5px;top:909.4px;font-size:17.0px;line-height:17.0px;color:#e2e2e2;white-space:nowrap;">-18</div>
<div style="position:absolute;left:323.0px;top:930.0px;width:1.0px;height:2.4px;background:#9a9a9a;"></div>
<div style="position:absolute;left:402.8px;top:909.4px;font-size:17.0px;line-height:17.0px;color:#e2e2e2;white-space:nowrap;">-12</div>
<div style="position:absolute;left:416.3px;top:930.0px;width:1.0px;height:2.4px;background:#9a9a9a;"></div>
<div style="position:absolute;left:453.8px;top:909.4px;font-size:17.0px;line-height:17.0px;color:#e2e2e2;white-space:nowrap;">-9</div>
<div style="position:absolute;left:462.6px;top:930.0px;width:1.0px;height:2.4px;background:#9a9a9a;"></div>
<div style="position:absolute;left:500.2px;top:909.4px;font-size:17.0px;line-height:17.0px;color:#e2e2e2;white-space:nowrap;">-6</div>
<div style="position:absolute;left:509.0px;top:930.0px;width:1.0px;height:2.4px;background:#9a9a9a;"></div>
<div style="position:absolute;left:546.6px;top:909.4px;font-size:17.0px;line-height:17.0px;color:#e2e2e2;white-space:nowrap;">-3</div>
<div style="position:absolute;left:555.4px;top:930.0px;width:1.0px;height:2.4px;background:#9a9a9a;"></div>
<div style="position:absolute;left:597.6px;top:909.4px;font-size:17.0px;line-height:17.0px;color:#e2e2e2;white-space:nowrap;">0</div>
<div style="position:absolute;left:602.3px;top:930.0px;width:1.0px;height:2.4px;background:#9a9a9a;"></div>
<div style="position:absolute;left:643.8px;top:909.4px;font-size:17.0px;line-height:17.0px;color:#e2e2e2;white-space:nowrap;">3</div>
<div style="position:absolute;left:648.5px;top:930.0px;width:1.0px;height:2.4px;background:#9a9a9a;"></div>
<div style="position:absolute;left:690.7px;top:909.4px;font-size:17.0px;line-height:17.0px;color:#e2e2e2;white-space:nowrap;">6</div>
<div style="position:absolute;left:695.4px;top:930.0px;width:1.0px;height:2.4px;background:#9a9a9a;"></div>
<div style="position:absolute;left:729.3px;top:909.4px;font-size:17.0px;line-height:17.0px;color:#e2e2e2;white-space:nowrap;">9</div>
<div style="position:absolute;left:742.3px;top:930.0px;width:1.0px;height:2.4px;background:#9a9a9a;"></div>
<div style="position:absolute;left:323.0px;top:936.0px;width:420.0px;height:49.0px;background:#3a3a3a;"></div>
<div style="position:absolute;left:323.0px;top:936.0px;width:265.0px;height:49.0px;background:#bcbcbc;"></div>
<div style="position:absolute;left:588.0px;top:936.0px;width:22.0px;height:49.0px;background:#6a975e;"></div>
<div style="position:absolute;left:327.5px;top:1014.8px;font-size:17.0px;line-height:17.0px;color:#e2e2e2;white-space:nowrap;">-18</div>
<div style="position:absolute;left:323.0px;top:1035.4px;width:1.0px;height:2.4px;background:#9a9a9a;"></div>
<div style="position:absolute;left:402.8px;top:1014.8px;font-size:17.0px;line-height:17.0px;color:#e2e2e2;white-space:nowrap;">-12</div>
<div style="position:absolute;left:416.3px;top:1035.4px;width:1.0px;height:2.4px;background:#9a9a9a;"></div>
<div style="position:absolute;left:453.8px;top:1014.8px;font-size:17.0px;line-height:17.0px;color:#e2e2e2;white-space:nowrap;">-9</div>
<div style="position:absolute;left:462.6px;top:1035.4px;width:1.0px;height:2.4px;background:#9a9a9a;"></div>
<div style="position:absolute;left:500.2px;top:1014.8px;font-size:17.0px;line-height:17.0px;color:#e2e2e2;white-space:nowrap;">-6</div>
<div style="position:absolute;left:509.0px;top:1035.4px;width:1.0px;height:2.4px;background:#9a9a9a;"></div>
<div style="position:absolute;left:546.6px;top:1014.8px;font-size:17.0px;line-height:17.0px;color:#e2e2e2;white-space:nowrap;">-3</div>
<div style="position:absolute;left:555.4px;top:1035.4px;width:1.0px;height:2.4px;background:#9a9a9a;"></div>
<div style="position:absolute;left:597.6px;top:1014.8px;font-size:17.0px;line-height:17.0px;color:#e2e2e2;white-space:nowrap;">0</div>
<div style="position:absolute;left:602.3px;top:1035.4px;width:1.0px;height:2.4px;background:#9a9a9a;"></div>
<div style="position:absolute;left:643.8px;top:1014.8px;font-size:17.0px;line-height:17.0px;color:#e2e2e2;white-space:nowrap;">3</div>
<div style="position:absolute;left:648.5px;top:1035.4px;width:1.0px;height:2.4px;background:#9a9a9a;"></div>
<div style="position:absolute;left:690.7px;top:1014.8px;font-size:17.0px;line-height:17.0px;color:#e2e2e2;white-space:nowrap;">6</div>
<div style="position:absolute;left:695.4px;top:1035.4px;width:1.0px;height:2.4px;background:#9a9a9a;"></div>
<div style="position:absolute;left:729.3px;top:1014.8px;font-size:17.0px;line-height:17.0px;color:#e2e2e2;white-space:nowrap;">9</div>
<div style="position:absolute;left:742.3px;top:1035.4px;width:1.0px;height:2.4px;background:#9a9a9a;"></div>
<div style="position:absolute;left:323.0px;top:1041.0px;width:420.0px;height:50.0px;background:#3a3a3a;"></div>
<div style="position:absolute;left:323.0px;top:1041.0px;width:265.0px;height:50.0px;background:#bcbcbc;"></div>
<div style="position:absolute;left:588.0px;top:1041.0px;width:10.0px;height:50.0px;background:#6a975e;"></div>
<div style="position:absolute;left:327.5px;top:1121.3px;font-size:17.0px;line-height:17.0px;color:#e2e2e2;white-space:nowrap;">-18</div>
<div style="position:absolute;left:323.0px;top:1141.9px;width:1.0px;height:2.4px;background:#9a9a9a;"></div>
<div style="position:absolute;left:402.8px;top:1121.3px;font-size:17.0px;line-height:17.0px;color:#e2e2e2;white-space:nowrap;">-12</div>
<div style="position:absolute;left:416.3px;top:1141.9px;width:1.0px;height:2.4px;background:#9a9a9a;"></div>
<div style="position:absolute;left:453.8px;top:1121.3px;font-size:17.0px;line-height:17.0px;color:#e2e2e2;white-space:nowrap;">-9</div>
<div style="position:absolute;left:462.6px;top:1141.9px;width:1.0px;height:2.4px;background:#9a9a9a;"></div>
<div style="position:absolute;left:500.2px;top:1121.3px;font-size:17.0px;line-height:17.0px;color:#e2e2e2;white-space:nowrap;">-6</div>
<div style="position:absolute;left:509.0px;top:1141.9px;width:1.0px;height:2.4px;background:#9a9a9a;"></div>
<div style="position:absolute;left:546.6px;top:1121.3px;font-size:17.0px;line-height:17.0px;color:#e2e2e2;white-space:nowrap;">-3</div>
<div style="position:absolute;left:555.4px;top:1141.9px;width:1.0px;height:2.4px;background:#9a9a9a;"></div>
<div style="position:absolute;left:597.6px;top:1121.3px;font-size:17.0px;line-height:17.0px;color:#e2e2e2;white-space:nowrap;">0</div>
<div style="position:absolute;left:602.3px;top:1141.9px;width:1.0px;height:2.4px;background:#9a9a9a;"></div>
<div style="position:absolute;left:643.8px;top:1121.3px;font-size:17.0px;line-height:17.0px;color:#e2e2e2;white-space:nowrap;">3</div>
<div style="position:absolute;left:648.5px;top:1141.9px;width:1.0px;height:2.4px;background:#9a9a9a;"></div>
<div style="position:absolute;left:690.7px;top:1121.3px;font-size:17.0px;line-height:17.0px;color:#e2e2e2;white-space:nowrap;">6</div>
<div style="position:absolute;left:695.4px;top:1141.9px;width:1.0px;height:2.4px;background:#9a9a9a;"></div>
<div style="position:absolute;left:729.3px;top:1121.3px;font-size:17.0px;line-height:17.0px;color:#e2e2e2;white-space:nowrap;">9</div>
<div style="position:absolute;left:742.3px;top:1141.9px;width:1.0px;height:2.4px;background:#9a9a9a;"></div>
<div style="position:absolute;left:323.0px;top:1147.0px;width:420.0px;height:50.0px;background:#3a3a3a;"></div>
<div style="position:absolute;left:585.0px;top:1147.0px;width:17.6px;height:50.0px;background:#bcbcbc;"></div>
<div style="position:absolute;left:602.6px;top:1147.0px;width:5.4px;height:50.0px;background:#9a5858;"></div>
<div style="position:absolute;left:804.5px;top:520.7px;font-size:22.5px;line-height:22.5px;color:#e8e8e8;white-space:nowrap;letter-spacing:0.91px;text-shadow:0.4px 0 0 #e8e8e8;">0.00 dB</div>
<div style="position:absolute;left:804.5px;top:556.7px;font-size:22.5px;line-height:22.5px;color:#e8e8e8;white-space:nowrap;letter-spacing:0.91px;text-shadow:0.4px 0 0 #e8e8e8;">0.00 dB</div>
<div style="position:absolute;left:807.2px;top:597.6px;font-size:22.5px;line-height:22.5px;color:#e8e8e8;white-space:nowrap;letter-spacing:-0.01px;text-shadow:0.4px 0 0 #e8e8e8;">0.21 dB</div>
<div style="position:absolute;left:806.2px;top:640.2px;font-size:22.5px;line-height:22.5px;color:#e8e8e8;white-space:nowrap;letter-spacing:0.32px;text-shadow:0.4px 0 0 #e8e8e8;">0.22 dB</div>
<div style="position:absolute;left:813.8px;top:739.6px;font-size:22.5px;line-height:22.5px;color:#e8e8e8;white-space:nowrap;transform:scaleX(0.9730);transform-origin:0 0;text-shadow:0.4px 0 0 #e8e8e8;">0.1 LU</div>
<div style="position:absolute;left:808.0px;top:853.8px;font-size:22.5px;line-height:22.5px;color:#e8e8e8;white-space:nowrap;letter-spacing:0.37px;text-shadow:0.4px 0 0 #e8e8e8;">-0.2 LU</div>
<div style="position:absolute;left:812.8px;top:949.7px;font-size:22.5px;line-height:22.5px;color:#e8e8e8;white-space:nowrap;letter-spacing:0.04px;text-shadow:0.4px 0 0 #e8e8e8;">0.4 LU</div>
<div style="position:absolute;left:808.0px;top:1054.7px;font-size:22.5px;line-height:22.5px;color:#e8e8e8;white-space:nowrap;letter-spacing:0.37px;text-shadow:0.4px 0 0 #e8e8e8;">-0.3 LU</div>
<div style="position:absolute;left:814.2px;top:1160.6px;font-size:22.5px;line-height:22.5px;color:#e8e8e8;white-space:nowrap;transform:scaleX(0.9579);transform-origin:0 0;text-shadow:0.4px 0 0 #e8e8e8;">1.4 LU</div>
<div class="btn" style="left:952px;top:487.5px;width:40px;height:96px"></div>
<svg style="position:absolute;left:952.0px;top:488.5px" width="40.0" height="95.0" viewBox="0 0 40.0 95.0">
<path d="M15,41.3 L20,36.3 L25,41.3 M15,54 L20,59 L25,54" fill="none" stroke="#e2e2e2" stroke-width="2.7"/>
</svg>
<div class="btn" style="left:952px;top:592.5px;width:40px;height:96px"></div>
<svg style="position:absolute;left:952.0px;top:593.5px" width="40.0" height="95.0" viewBox="0 0 40.0 95.0">
<path d="M15,41.3 L20,36.3 L25,41.3 M15,54 L20,59 L25,54" fill="none" stroke="#e2e2e2" stroke-width="2.7"/>
</svg>
<div class="btn" style="left:952px;top:697.5px;width:40px;height:96px"></div>
<svg style="position:absolute;left:952.0px;top:698.5px" width="40.0" height="95.0" viewBox="0 0 40.0 95.0">
<path d="M15,41.3 L20,36.3 L25,41.3 M15,54 L20,59 L25,54" fill="none" stroke="#e2e2e2" stroke-width="2.7"/>
</svg>
<div class="btn" style="left:952px;top:802.5px;width:40px;height:96px"></div>
<svg style="position:absolute;left:952.0px;top:803.5px" width="40.0" height="95.0" viewBox="0 0 40.0 95.0">
<path d="M15,41.3 L20,36.3 L25,41.3 M15,54 L20,59 L25,54" fill="none" stroke="#e2e2e2" stroke-width="2.7"/>
</svg>
<div class="btn" style="left:952px;top:907.5px;width:40px;height:96px"></div>
<svg style="position:absolute;left:952.0px;top:908.5px" width="40.0" height="95.0" viewBox="0 0 40.0 95.0">
<path d="M15,41.3 L20,36.3 L25,41.3 M15,54 L20,59 L25,54" fill="none" stroke="#e2e2e2" stroke-width="2.7"/>
</svg>
<div class="btn" style="left:952px;top:1012.5px;width:40px;height:96px"></div>
<svg style="position:absolute;left:952.0px;top:1013.5px" width="40.0" height="95.0" viewBox="0 0 40.0 95.0">
<path d="M15,41.3 L20,36.3 L25,41.3 M15,54 L20,59 L25,54" fill="none" stroke="#e2e2e2" stroke-width="2.7"/>
</svg>
<div class="btn" style="left:952px;top:1117.5px;width:40px;height:96px"></div>
<svg style="position:absolute;left:952.0px;top:1118.5px" width="40.0" height="95.0" viewBox="0 0 40.0 95.0">
<path d="M15,41.3 L20,36.3 L25,41.3 M15,54 L20,59 L25,54" fill="none" stroke="#e2e2e2" stroke-width="2.7"/>
</svg>
<div style="position:absolute;left:1023.0px;top:416.0px;width:12.0px;height:870.0px;background:repeating-linear-gradient(180deg,#1c1c1c 0px,#1c1c1c 5px,#282828 5px,#282828 8px);box-shadow:0 0 3px 1px rgba(0,0,0,0.25);"></div>
<div style="position:absolute;left:1044.0px;top:423.0px;width:684.0px;height:814.0px;background:#262626;border:2px solid #0c0c0c;box-sizing:border-box;"></div>
<div class="btn" style="left:1066px;top:445.0px;width:43px;height:154.5px"></div>
<div class="btn" style="left:1066px;top:609.5px;width:43px;height:154.5px"></div>
<div style="position:absolute;left:1066.5px;top:774.0px;width:42.0px;height:153.5px;background:#8e7b69;"></div>
<div class="btn" style="left:1066px;top:937.0px;width:43px;height:155.5px"></div>
<div class="btn" style="left:1066px;top:1102.0px;width:43px;height:32.0px"></div>
<div style="position:absolute;left:1066.5px;top:1144.0px;width:42.0px;height:30.5px;background:#8e7b69;"></div>
<div class="btn" style="left:1066px;top:1184.5px;width:43px;height:31.5px"></div>
<svg style="position:absolute;left:1066.0px;top:440.0px" width="44.0" height="780.0" viewBox="0 0 44.0 780.0">
<circle cx="21.3" cy="82" r="13" fill="#e6e6e6"/><path d="M21.3,75 V89 M14.3,82 H28.3" stroke="#444" stroke-width="2.6"/>
<circle cx="21.3" cy="246" r="13" fill="#e6e6e6"/><path d="M14.3,246 H28.3" stroke="#444" stroke-width="2.6"/>
<path d="M11,399.5 L21,410.5 L11,421.5 Z M21,399.5 L31.5,410.5 L21,421.5 Z" fill="#e6e6e6"/>
<path d="M14,569 H29 M14,575 H29 M14,581 H29" stroke="#e6e6e6" stroke-width="1.8"/>
<rect x="13" y="668" width="5.8" height="20" rx="1" fill="#e6e6e6"/><rect x="23.6" y="668" width="5.8" height="20" rx="1" fill="#e6e6e6"/>
<path d="M15.2,710.5 A10.2,10.2 0 1 0 27.4,710.5" fill="none" stroke="#e6e6e6" stroke-width="2"/><path d="M21.3,706 V719" stroke="#e6e6e6" stroke-width="2"/>
<circle cx="21.3" cy="760.3" r="13" fill="#e6e6e6"/>
</svg>
<div style="position:absolute;left:1081.5px;top:1190.7px;font-size:21.0px;line-height:21.0px;color:#333;white-space:nowrap;">?</div>
<div style="position:absolute;left:1148.6px;top:449.6px;font-size:17.0px;line-height:17.0px;color:#a8a8a8;white-space:nowrap;">9 LU</div>
<div style="position:absolute;left:1148.6px;top:525.6px;font-size:17.0px;line-height:17.0px;color:#a8a8a8;white-space:nowrap;">6 LU</div>
<div style="position:absolute;left:1148.6px;top:610.2px;font-size:17.0px;line-height:17.0px;color:#a8a8a8;white-space:nowrap;">3 LU</div>
<div style="position:absolute;left:1148.6px;top:695.3px;font-size:17.0px;line-height:17.0px;color:#a8a8a8;white-space:nowrap;">0 LU</div>
<div style="position:absolute;left:1142.9px;top:780.6px;font-size:17.0px;line-height:17.0px;color:#a8a8a8;white-space:nowrap;">-3 LU</div>
<div style="position:absolute;left:1142.9px;top:865.6px;font-size:17.0px;line-height:17.0px;color:#a8a8a8;white-space:nowrap;">-6 LU</div>
<div style="position:absolute;left:1142.9px;top:950.1px;font-size:17.0px;line-height:17.0px;color:#a8a8a8;white-space:nowrap;">-9 LU</div>
<div style="position:absolute;left:1133.5px;top:1035.2px;font-size:17.0px;line-height:17.0px;color:#a8a8a8;white-space:nowrap;">-12 LU</div>
<div style="position:absolute;left:1133.5px;top:1120.3px;font-size:17.0px;line-height:17.0px;color:#a8a8a8;white-space:nowrap;">-15 LU</div>
<div style="position:absolute;left:1133.5px;top:1194.2px;font-size:17.0px;line-height:17.0px;color:#a8a8a8;white-space:nowrap;">-18 LU</div>
<svg width="1800" height="1300" viewBox="0 0 1800 1300" style="position:absolute;left:0;top:0">
<defs><clipPath id="gc"><rect x="1192" y="447" width="475" height="766"/></clipPath>
<linearGradient id="ph" x1="0" x2="1" y1="0" y2="0"><stop offset="0" stop-color="#fff" stop-opacity="0"/><stop offset="0.35" stop-color="#fff" stop-opacity="0.34"/><stop offset="0.8" stop-color="#fff" stop-opacity="0.36"/><stop offset="1" stop-color="#fff" stop-opacity="0"/></linearGradient></defs>
<rect x="1192" y="447" width="475" height="766" fill="#272727"/>
<path d="M1192,474.5 H1667 M1192,503.5 H1667 M1192,559.5 H1667 M1192,588.5 H1667 M1192,645.5 H1667 M1192,673.5 H1667 M1192,730.5 H1667 M1192,758.5 H1667 M1192,815.5 H1667 M1192,843.5 H1667 M1192,900.5 H1667 M1192,928.5 H1667 M1192,985.5 H1667 M1192,1013.5 H1667 M1192,1070.5 H1667 M1192,1099.5 H1667 M1192,1155.5 H1667 M1192,1184.5 H1667 M1212.5,447 V1213 M1232.5,447 V1213 M1252.5,447 V1213 M1271.5,447 V1213 M1291.5,447 V1213 M1311.5,447 V1213 M1331.5,447 V1213 M1351.5,447 V1213 M1371.5,447 V1213 M1391.5,447 V1213 M1411.5,447 V1213 M1431.5,447 V1213 M1451.5,447 V1213 M1470.5,447 V1213 M1490.5,447 V1213 M1510.5,447 V1213 M1530.5,447 V1213 M1550.5,447 V1213 M1570.5,447 V1213 M1590.5,447 V1213 M1610.5,447 V1213 M1630.5,447 V1213 M1650.5,447 V1213" stroke="#202020" stroke-width="1" fill="none"/>
<path d="M1192,531.5 H1667 M1192,616.5 H1667 M1192,701.5 H1667 M1192,786.5 H1667 M1192,872.5 H1667 M1192,957.5 H1667 M1192,1042.5 H1667 M1192,1127.5 H1667" stroke="#1a1a1a" stroke-width="1" fill="none"/>
<g clip-path="url(#gc)">
<rect x="1192" y="690" width="475" height="523" fill="rgb(190,20,22)" fill-opacity="0.31"/>
<path d="M1192.0,703.0 L1248.0,703.0 L1254.0,717.5 L1305.0,717.5 L1309.0,719.5 L1360.0,719.5 L1364.5,731.0 L1366.0,717.0 L1475.0,717.0 L1477.0,704.5 L1611.0,703.5 L1619.0,711.0 L1621.0,700.5 L1667.0,700.5 L1667.0,1213.0 L1192.0,1213.0 Z" fill="rgb(128,21,26)"/>
<path d="M1192,690.5 H1667" stroke="#7e2228" stroke-width="1" stroke-opacity="0.8"/>
<path d="M1192.0,703.0 L1248.0,703.0 L1254.0,717.5 L1305.0,717.5 L1309.0,719.5 L1360.0,719.5 L1364.5,731.0 L1366.0,717.0 L1475.0,717.0 L1477.0,704.5 L1611.0,703.5 L1619.0,711.0 L1621.0,700.5 L1667.0,700.5" fill="none" stroke="#b8383a" stroke-opacity="0.8" stroke-width="1"/>
<path d="M1192.0,703.0 C1194.3,704.6 1196.7,707.7 1199.0,707.7 C1199.5,707.7 1200.0,703.7 1200.5,700.0 C1201.3,693.8 1202.2,666.3 1203.0,660.0 C1204.7,647.3 1206.3,640.2 1208.0,637.0 C1210.0,633.2 1212.0,630.0 1214.0,630.0 C1217.5,630.0 1220.9,630.0 1224.4,630.0 C1225.6,630.0 1226.8,650.2 1228.0,661.5 C1229.0,670.9 1230.0,683.6 1231.0,692.0 C1231.9,699.3 1232.7,709.2 1233.6,710.8 C1235.9,715.0 1238.1,716.0 1240.4,717.0 C1244.7,718.9 1249.0,720.6 1253.3,720.6 C1253.9,720.6 1254.4,716.7 1255.0,715.0 C1256.3,711.2 1257.5,706.2 1258.8,704.6 C1259.9,703.3 1260.9,702.0 1262.0,702.0 C1267.9,702.0 1273.9,702.0 1279.8,702.0 C1280.5,702.0 1281.3,709.3 1282.0,717.0 C1282.5,722.3 1283.0,734.1 1283.5,747.7 C1284.0,761.3 1284.5,793.3 1285.0,809.0 C1285.3,819.4 1285.7,826.8 1286.0,835.0 C1286.7,851.5 1287.3,869.0 1288.0,881.5 C1289.0,900.3 1290.0,920.6 1291.0,927.7 C1292.0,934.8 1293.0,940.2 1294.0,941.5 C1296.0,944.0 1298.0,945.5 1300.0,945.5 C1303.0,945.5 1306.0,945.5 1309.0,945.5 C1309.7,945.5 1310.3,914.2 1311.0,900.0 C1311.6,888.0 1312.1,870.4 1312.7,866.0 C1314.1,854.9 1315.6,851.8 1317.0,847.7 C1318.0,844.8 1319.0,841.2 1320.0,841.0 C1324.7,840.2 1329.3,840.0 1334.0,840.0 C1334.6,840.0 1335.2,859.5 1335.8,866.0 C1336.8,876.8 1337.8,887.0 1338.8,890.8 C1340.9,898.6 1342.9,902.7 1345.0,904.6 C1347.0,906.4 1349.0,907.8 1351.0,908.0 C1355.5,908.4 1359.9,908.5 1364.4,908.5 C1364.8,908.5 1365.1,870.6 1365.5,850.0 C1366.0,821.9 1366.5,773.9 1367.0,760.0 C1368.0,732.2 1369.0,717.1 1370.0,710.0 C1371.9,696.3 1373.9,686.7 1375.8,686.0 C1380.4,684.3 1385.0,683.7 1389.6,683.7 C1390.6,683.7 1391.7,690.3 1392.7,692.0 C1395.1,696.0 1397.6,699.1 1400.0,700.0 C1402.2,700.8 1404.3,701.5 1406.5,701.5 C1409.0,701.5 1411.5,700.0 1414.0,698.0 C1415.7,696.6 1417.3,692.8 1419.0,686.0 C1420.0,681.9 1421.0,662.2 1422.0,655.0 C1423.5,644.2 1425.0,633.1 1426.5,630.8 C1429.0,627.0 1431.5,624.6 1434.0,624.6 C1437.7,624.6 1441.3,624.6 1445.0,624.6 C1446.0,624.6 1447.0,644.8 1448.0,655.0 C1449.0,665.2 1450.0,677.5 1451.0,686.0 C1452.0,694.5 1453.0,706.1 1454.0,707.7 C1456.7,711.9 1459.3,712.4 1462.0,713.8 C1466.0,715.9 1470.0,718.5 1474.0,718.5 C1474.8,718.5 1475.7,709.0 1476.5,700.0 C1477.3,691.7 1478.0,661.4 1478.8,655.0 C1480.4,641.8 1481.9,634.0 1483.5,632.0 C1485.0,630.0 1486.5,628.6 1488.0,628.6 C1491.7,628.6 1495.3,628.6 1499.0,628.6 C1500.0,628.6 1501.0,638.6 1502.0,645.0 C1503.0,651.4 1504.0,659.7 1505.0,668.0 C1505.7,673.5 1506.3,681.7 1507.0,686.0 C1507.9,691.6 1508.7,697.8 1509.6,698.7 C1512.1,701.3 1514.5,702.4 1517.0,702.4 C1520.7,702.4 1524.3,702.3 1528.0,701.8 C1528.5,701.7 1529.1,688.6 1529.6,680.0 C1530.4,667.2 1531.2,632.1 1532.0,631.6 C1532.7,631.2 1533.3,631.0 1534.0,631.0 C1534.9,631.0 1535.8,646.7 1536.7,655.6 C1537.6,664.8 1538.6,680.4 1539.5,686.0 C1540.8,693.9 1542.2,698.6 1543.5,701.8 C1545.0,705.4 1546.5,709.1 1548.0,709.5 C1550.0,710.1 1552.0,710.4 1554.0,710.4 C1556.7,710.4 1559.3,708.9 1562.0,706.4 C1563.5,705.0 1565.1,693.1 1566.6,689.5 C1568.1,686.0 1569.5,683.0 1571.0,681.8 C1573.7,679.7 1576.3,678.6 1579.0,678.0 C1582.6,677.2 1586.1,676.5 1589.7,676.5 C1590.1,676.5 1590.6,681.9 1591.0,686.0 C1592.0,695.5 1593.0,717.2 1594.0,732.6 C1594.7,742.8 1595.3,750.8 1596.0,763.0 C1596.5,771.5 1596.9,789.3 1597.4,794.0 C1598.4,804.5 1599.5,811.1 1600.5,812.6 C1602.5,815.5 1604.6,815.6 1606.6,817.0 C1609.1,818.7 1611.5,820.3 1614.0,822.0 C1615.8,823.3 1617.7,826.0 1619.5,826.0 C1619.8,826.0 1620.2,826.0 1620.5,826.0 C1621.0,826.0 1621.5,776.2 1622.0,760.0 C1622.7,738.5 1623.3,718.4 1624.0,710.0 C1625.3,693.1 1626.7,680.8 1628.0,678.7 C1629.6,676.2 1631.2,674.7 1632.8,674.7 C1636.4,674.7 1640.0,674.7 1643.6,674.7 C1644.6,674.7 1645.7,682.9 1646.7,686.4 C1647.7,689.8 1648.7,694.7 1649.7,695.6 C1652.8,698.5 1655.9,698.7 1659.0,700.0 C1661.7,701.1 1664.3,702.0 1667.0,703.0 L1667,1213 L1192,1213 Z" fill="rgb(30,150,10)" fill-opacity="0.40"/>
<path d="M1192.0,703.0 C1194.3,704.6 1196.7,707.7 1199.0,707.7 C1199.5,707.7 1200.0,703.7 1200.5,700.0 C1201.3,693.8 1202.2,666.3 1203.0,660.0 C1204.7,647.3 1206.3,640.2 1208.0,637.0 C1210.0,633.2 1212.0,630.0 1214.0,630.0 C1217.5,630.0 1220.9,630.0 1224.4,630.0 C1225.6,630.0 1226.8,650.2 1228.0,661.5 C1229.0,670.9 1230.0,683.6 1231.0,692.0 C1231.9,699.3 1232.7,709.2 1233.6,710.8 C1235.9,715.0 1238.1,716.0 1240.4,717.0 C1244.7,718.9 1249.0,720.6 1253.3,720.6 C1253.9,720.6 1254.4,716.7 1255.0,715.0 C1256.3,711.2 1257.5,706.2 1258.8,704.6 C1259.9,703.3 1260.9,702.0 1262.0,702.0 C1267.9,702.0 1273.9,702.0 1279.8,702.0 C1280.5,702.0 1281.3,709.3 1282.0,717.0 C1282.5,722.3 1283.0,734.1 1283.5,747.7 C1284.0,761.3 1284.5,793.3 1285.0,809.0 C1285.3,819.4 1285.7,826.8 1286.0,835.0 C1286.7,851.5 1287.3,869.0 1288.0,881.5 C1289.0,900.3 1290.0,920.6 1291.0,927.7 C1292.0,934.8 1293.0,940.2 1294.0,941.5 C1296.0,944.0 1298.0,945.5 1300.0,945.5 C1303.0,945.5 1306.0,945.5 1309.0,945.5 C1309.7,945.5 1310.3,914.2 1311.0,900.0 C1311.6,888.0 1312.1,870.4 1312.7,866.0 C1314.1,854.9 1315.6,851.8 1317.0,847.7 C1318.0,844.8 1319.0,841.2 1320.0,841.0 C1324.7,840.2 1329.3,840.0 1334.0,840.0 C1334.6,840.0 1335.2,859.5 1335.8,866.0 C1336.8,876.8 1337.8,887.0 1338.8,890.8 C1340.9,898.6 1342.9,902.7 1345.0,904.6 C1347.0,906.4 1349.0,907.8 1351.0,908.0 C1355.5,908.4 1359.9,908.5 1364.4,908.5 C1364.8,908.5 1365.1,870.6 1365.5,850.0 C1366.0,821.9 1366.5,773.9 1367.0,760.0 C1368.0,732.2 1369.0,717.1 1370.0,710.0 C1371.9,696.3 1373.9,686.7 1375.8,686.0 C1380.4,684.3 1385.0,683.7 1389.6,683.7 C1390.6,683.7 1391.7,690.3 1392.7,692.0 C1395.1,696.0 1397.6,699.1 1400.0,700.0 C1402.2,700.8 1404.3,701.5 1406.5,701.5 C1409.0,701.5 1411.5,700.0 1414.0,698.0 C1415.7,696.6 1417.3,692.8 1419.0,686.0 C1420.0,681.9 1421.0,662.2 1422.0,655.0 C1423.5,644.2 1425.0,633.1 1426.5,630.8 C1429.0,627.0 1431.5,624.6 1434.0,624.6 C1437.7,624.6 1441.3,624.6 1445.0,624.6 C1446.0,624.6 1447.0,644.8 1448.0,655.0 C1449.0,665.2 1450.0,677.5 1451.0,686.0 C1452.0,694.5 1453.0,706.1 1454.0,707.7 C1456.7,711.9 1459.3,712.4 1462.0,713.8 C1466.0,715.9 1470.0,718.5 1474.0,718.5 C1474.8,718.5 1475.7,709.0 1476.5,700.0 C1477.3,691.7 1478.0,661.4 1478.8,655.0 C1480.4,641.8 1481.9,634.0 1483.5,632.0 C1485.0,630.0 1486.5,628.6 1488.0,628.6 C1491.7,628.6 1495.3,628.6 1499.0,628.6 C1500.0,628.6 1501.0,638.6 1502.0,645.0 C1503.0,651.4 1504.0,659.7 1505.0,668.0 C1505.7,673.5 1506.3,681.7 1507.0,686.0 C1507.9,691.6 1508.7,697.8 1509.6,698.7 C1512.1,701.3 1514.5,702.4 1517.0,702.4 C1520.7,702.4 1524.3,702.3 1528.0,701.8 C1528.5,701.7 1529.1,688.6 1529.6,680.0 C1530.4,667.2 1531.2,632.1 1532.0,631.6 C1532.7,631.2 1533.3,631.0 1534.0,631.0 C1534.9,631.0 1535.8,646.7 1536.7,655.6 C1537.6,664.8 1538.6,680.4 1539.5,686.0 C1540.8,693.9 1542.2,698.6 1543.5,701.8 C1545.0,705.4 1546.5,709.1 1548.0,709.5 C1550.0,710.1 1552.0,710.4 1554.0,710.4 C1556.7,710.4 1559.3,708.9 1562.0,706.4 C1563.5,705.0 1565.1,693.1 1566.6,689.5 C1568.1,686.0 1569.5,683.0 1571.0,681.8 C1573.7,679.7 1576.3,678.6 1579.0,678.0 C1582.6,677.2 1586.1,676.5 1589.7,676.5 C1590.1,676.5 1590.6,681.9 1591.0,686.0 C1592.0,695.5 1593.0,717.2 1594.0,732.6 C1594.7,742.8 1595.3,750.8 1596.0,763.0 C1596.5,771.5 1596.9,789.3 1597.4,794.0 C1598.4,804.5 1599.5,811.1 1600.5,812.6 C1602.5,815.5 1604.6,815.6 1606.6,817.0 C1609.1,818.7 1611.5,820.3 1614.0,822.0 C1615.8,823.3 1617.7,826.0 1619.5,826.0 C1619.8,826.0 1620.2,826.0 1620.5,826.0 C1621.0,826.0 1621.5,776.2 1622.0,760.0 C1622.7,738.5 1623.3,718.4 1624.0,710.0 C1625.3,693.1 1626.7,680.8 1628.0,678.7 C1629.6,676.2 1631.2,674.7 1632.8,674.7 C1636.4,674.7 1640.0,674.7 1643.6,674.7 C1644.6,674.7 1645.7,682.9 1646.7,686.4 C1647.7,689.8 1648.7,694.7 1649.7,695.6 C1652.8,698.5 1655.9,698.7 1659.0,700.0 C1661.7,701.1 1664.3,702.0 1667.0,703.0" fill="none" stroke="#35b035" stroke-width="1.1" stroke-opacity="0.9"/>
<path d="M1192.0,828.5 L1200.4,828.5 L1200.4,447.0 L1207.0,447.0 L1209.4,505.0 L1212.0,565.0 L1215.0,625.0 L1218.0,685.0 L1219.6,730.0 L1221.0,778.0 L1223.5,809.0 L1228.0,820.0 L1235.0,824.0 L1255.5,827.0 L1255.5,557.0 L1259.6,557.0 L1262.4,625.0 L1265.6,685.0 L1269.5,748.0 L1275.0,809.0 L1281.0,821.0 L1290.0,825.0 L1309.6,827.5 L1309.6,575.0 L1311.0,575.0 L1311.0,514.0 L1315.0,514.0 L1316.4,565.0 L1319.6,625.0 L1322.6,685.0 L1325.0,730.0 L1327.5,778.0 L1333.0,822.0 L1340.0,826.0 L1365.0,828.0 L1365.0,447.0 L1371.0,447.0 L1373.0,505.0 L1375.6,565.0 L1379.0,625.0 L1382.0,685.0 L1384.0,722.0 L1387.0,712.0 L1391.0,704.6 L1394.0,735.0 L1397.0,763.0 L1403.0,740.0 L1409.6,717.0 L1415.0,700.0 L1420.4,686.0 L1420.4,447.0 L1427.0,447.0 L1429.6,532.0 L1434.0,625.0 L1437.0,717.0 L1439.0,748.0 L1443.5,809.0 L1449.6,822.0 L1460.0,825.0 L1475.8,826.0 L1475.8,447.0 L1482.0,447.0 L1485.0,532.0 L1489.0,625.0 L1492.0,700.0 L1496.0,740.0 L1500.0,760.0 L1505.0,748.0 L1511.0,723.0 L1520.0,708.0 L1526.6,697.0 L1532.7,711.0 L1537.0,711.0 L1540.0,690.0 L1542.0,680.0 L1544.0,690.0 L1546.6,702.0 L1549.7,683.0 L1552.0,683.0 L1554.0,671.0 L1557.0,671.0 L1560.0,666.0 L1566.6,664.0 L1566.6,520.7 L1569.7,520.7 L1573.0,590.0 L1575.0,625.0 L1577.0,640.0 L1579.0,640.0 L1582.6,668.0 L1584.5,686.0 L1588.0,700.0 L1591.0,690.0 L1593.7,672.5 L1595.5,690.0 L1597.4,711.0 L1600.5,735.7 L1602.5,735.0 L1604.0,726.4 L1606.0,750.0 L1611.0,809.6 L1617.4,822.0 L1620.5,824.0 L1620.5,447.0 L1625.0,447.0 L1628.0,532.0 L1633.0,625.0 L1637.0,717.0 L1639.6,748.0 L1643.0,758.8 L1646.7,794.0 L1652.8,819.0 L1660.0,826.0 L1667.0,826.0 L1667.0,832.0 L1192.0,832.0 Z" fill="#fff" fill-opacity="0.29"/>
<path d="M1200.0,832.0 L1225.0,836.0 L1244.7,1213.0 L1200.0,1213.0 Z" fill="#fffbe8" fill-opacity="0.21"/>
<path d="M1255.0,832.0 L1272.7,835.0 L1291.0,1213.0 L1255.0,1213.0 Z" fill="#fffbe8" fill-opacity="0.21"/>
<path d="M1309.6,832.0 L1329.6,835.0 L1349.0,1213.0 L1309.6,1213.0 Z" fill="#fffbe8" fill-opacity="0.21"/>
<path d="M1365.0,832.0 L1445.0,832.0 L1445.0,845.0 L1464.4,1213.0 L1365.0,1213.0 Z" fill="#fffbe8" fill-opacity="0.21"/>
<path d="M1475.8,832.0 L1649.7,832.0 L1649.7,838.5 L1666.7,1199.0 L1666.7,1213.0 L1475.8,1213.0 Z" fill="#fffbe8" fill-opacity="0.21"/>
<path d="M1192.0,831.0 L1200.0,831.0 L1200.0,832.5 L1192.0,832.5 Z" fill="#fffbe8" fill-opacity="0.21"/>
<path d="M1223.0,835.0 L1255.0,836.0 L1255.0,832.0 L1223.0,832.0 Z" fill="#fffbe8" fill-opacity="0.21"/>
<path d="M1272.0,835.0 L1310.0,836.0 L1310.0,832.0 L1272.0,832.0 Z" fill="#fffbe8" fill-opacity="0.21"/>
<path d="M1329.0,835.0 L1365.0,836.0 L1365.0,832.0 L1329.0,832.0 Z" fill="#fffbe8" fill-opacity="0.21"/>
<path d="M1445.0,836.0 L1476.0,837.0 L1476.0,832.0 L1445.0,832.0 Z" fill="#fffbe8" fill-opacity="0.21"/>
<path d="M1192.0,828.5 L1200.4,828.5 L1200.4,447.0 L1207.0,447.0 L1209.4,505.0 L1212.0,565.0 L1215.0,625.0 L1218.0,685.0 L1219.6,730.0 L1221.0,778.0 L1223.5,809.0 L1228.0,820.0 L1235.0,824.0 L1255.5,827.0 L1255.5,557.0 L1259.6,557.0 L1262.4,625.0 L1265.6,685.0 L1269.5,748.0 L1275.0,809.0 L1281.0,821.0 L1290.0,825.0 L1309.6,827.5 L1309.6,575.0 L1311.0,575.0 L1311.0,514.0 L1315.0,514.0 L1316.4,565.0 L1319.6,625.0 L1322.6,685.0 L1325.0,730.0 L1327.5,778.0 L1333.0,822.0 L1340.0,826.0 L1365.0,828.0 L1365.0,447.0 L1371.0,447.0 L1373.0,505.0 L1375.6,565.0 L1379.0,625.0 L1382.0,685.0 L1384.0,722.0 L1387.0,712.0 L1391.0,704.6 L1394.0,735.0 L1397.0,763.0 L1403.0,740.0 L1409.6,717.0 L1415.0,700.0 L1420.4,686.0 L1420.4,447.0 L1427.0,447.0 L1429.6,532.0 L1434.0,625.0 L1437.0,717.0 L1439.0,748.0 L1443.5,809.0 L1449.6,822.0 L1460.0,825.0 L1475.8,826.0 L1475.8,447.0 L1482.0,447.0 L1485.0,532.0 L1489.0,625.0 L1492.0,700.0 L1496.0,740.0 L1500.0,760.0 L1505.0,748.0 L1511.0,723.0 L1520.0,708.0 L1526.6,697.0 L1532.7,711.0 L1537.0,711.0 L1540.0,690.0 L1542.0,680.0 L1544.0,690.0 L1546.6,702.0 L1549.7,683.0 L1552.0,683.0 L1554.0,671.0 L1557.0,671.0 L1560.0,666.0 L1566.6,664.0 L1566.6,520.7 L1569.7,520.7 L1573.0,590.0 L1575.0,625.0 L1577.0,640.0 L1579.0,640.0 L1582.6,668.0 L1584.5,686.0 L1588.0,700.0 L1591.0,690.0 L1593.7,672.5 L1595.5,690.0 L1597.4,711.0 L1600.5,735.7 L1602.5,735.0 L1604.0,726.4 L1606.0,750.0 L1611.0,809.6 L1617.4,822.0 L1620.5,824.0 L1620.5,447.0 L1625.0,447.0 L1628.0,532.0 L1633.0,625.0 L1637.0,717.0 L1639.6,748.0 L1643.0,758.8 L1646.7,794.0 L1652.8,819.0 L1660.0,826.0 L1667.0,826.0" fill="none" stroke="#fff" stroke-opacity="0.38" stroke-width="1"/>
<path d="M1225.0,836.0 L1244.7,1213.0" fill="none" stroke="#fffbe8" stroke-opacity="0.55" stroke-width="1.2"/>
<path d="M1272.7,835.0 L1291.0,1213.0" fill="none" stroke="#fffbe8" stroke-opacity="0.55" stroke-width="1.2"/>
<path d="M1329.6,835.0 L1349.0,1213.0" fill="none" stroke="#fffbe8" stroke-opacity="0.55" stroke-width="1.2"/>
<path d="M1445.0,845.0 L1464.4,1213.0" fill="none" stroke="#fffbe8" stroke-opacity="0.55" stroke-width="1.2"/>
<path d="M1611.0,844.6 L1620.5,1017.0" fill="none" stroke="#fffbe8" stroke-opacity="0.55" stroke-width="1.2"/>
<path d="M1649.7,838.5 L1666.7,1199.0" fill="none" stroke="#fffbe8" stroke-opacity="0.55" stroke-width="1.2"/>
<path d="M1192.0,828.5 L1200.4,828.5 L1200.4,447.0 L1205.5,447.0 L1207.2,505.0 L1209.2,565.0 L1211.5,625.0 L1213.8,685.0 L1214.9,730.0 L1215.8,778.0 L1217.3,800.0 L1219.0,812.0 L1222.0,820.0 L1227.0,824.0 L1228.0,823.9 L1229.1,825.1 L1230.2,824.9 L1231.5,823.4 L1232.9,823.6 L1234.2,823.9 L1235.3,825.1 L1237.0,824.4 L1238.1,825.9 L1239.9,826.0 L1241.2,827.1 L1242.2,826.9 L1243.5,825.4 L1244.6,825.9 L1246.2,825.9 L1247.7,826.9 L1249.0,826.9 L1250.0,826.2 L1251.2,827.3 L1252.5,826.9 L1254.0,827.3 L1255.3,827.8 L1255.5,827.5 L1255.5,557.0 L1258.4,557.0 L1259.9,625.0 L1261.9,685.0 L1264.6,748.0 L1268.3,800.0 L1270.0,812.0 L1273.0,820.0 L1278.0,824.0 L1279.0,823.6 L1280.5,824.8 L1282.2,825.6 L1283.4,826.5 L1284.5,824.9 L1286.1,824.3 L1287.5,824.2 L1289.0,826.4 L1290.5,826.8 L1291.7,826.4 L1293.2,826.3 L1294.6,827.0 L1296.3,826.4 L1297.9,825.8 L1299.4,827.1 L1301.2,827.5 L1302.4,827.0 L1304.0,826.7 L1305.3,827.1 L1306.4,827.2 L1308.0,827.5 L1309.2,827.9 L1309.6,828.0 L1309.6,575.0 L1311.0,575.0 L1311.0,514.0 L1313.8,514.0 L1314.4,565.0 L1316.6,625.0 L1318.7,685.0 L1320.3,730.0 L1322.0,778.0 L1323.8,800.0 L1325.5,812.0 L1328.5,820.0 L1333.5,824.0 L1334.5,823.0 L1335.9,824.8 L1337.6,826.0 L1339.3,824.4 L1340.6,824.9 L1342.3,826.8 L1343.4,824.8 L1344.6,825.1 L1346.0,826.2 L1347.2,825.0 L1348.5,826.1 L1350.0,827.5 L1351.5,826.8 L1353.0,827.2 L1354.1,827.7 L1355.7,827.8 L1357.3,827.3 L1358.7,827.2 L1360.2,827.4 L1361.2,827.7 L1362.4,828.0 L1363.4,827.9 L1364.5,828.2 L1365.0,828.5 L1365.0,447.0 L1369.6,447.0 L1370.9,505.0 L1372.8,565.0 L1375.5,625.0 L1377.8,685.0 L1380.0,700.0 L1380.0,718.9 L1381.8,801.6 L1383.1,744.9 L1384.6,815.0 L1385.8,725.6 L1387.7,811.1 L1389.3,754.4 L1390.6,813.5 L1391.9,724.8 L1393.2,823.5 L1395.1,763.8 L1396.4,817.5 L1397.6,776.1 L1399.5,811.6 L1401.2,773.6 L1402.7,821.7 L1404.4,755.3 L1406.2,817.0 L1407.5,735.0 L1409.4,802.9 L1411.2,723.4 L1412.9,816.8 L1414.4,737.0 L1415.7,821.5 L1417.1,736.9 L1418.7,793.0 L1420.4,690.0 L1420.4,447.0 L1425.5,447.0 L1427.1,532.0 L1430.5,625.0 L1432.4,717.0 L1434.1,748.0 L1437.3,800.0 L1439.0,812.0 L1442.0,820.0 L1447.0,824.0 L1448.0,826.2 L1449.8,826.4 L1451.1,823.7 L1452.3,823.8 L1453.4,825.4 L1455.1,826.3 L1456.5,825.8 L1458.2,824.1 L1459.7,826.7 L1461.3,826.4 L1462.7,825.0 L1464.3,825.6 L1466.0,827.2 L1467.3,826.0 L1469.1,826.8 L1470.2,825.8 L1471.3,827.3 L1473.0,826.2 L1474.6,827.6 L1475.8,827.0 L1475.8,447.0 L1480.5,447.0 L1482.6,532.0 L1485.5,625.0 L1487.7,700.0 L1490.0,715.0 L1490.0,699.0 L1491.6,817.8 L1492.8,712.3 L1494.4,812.0 L1496.3,763.9 L1498.1,811.5 L1499.5,781.2 L1500.9,822.2 L1502.5,778.7 L1504.0,823.2 L1505.8,768.9 L1507.3,813.3 L1509.2,756.0 L1511.0,812.3 L1512.6,743.7 L1513.8,813.0 L1515.1,763.3 L1516.9,818.9 L1518.4,726.4 L1520.0,814.3 L1521.6,730.0 L1523.3,819.6 L1524.9,741.1 L1526.3,800.2 L1527.8,725.2 L1529.6,797.9 L1531.1,728.9 L1532.6,809.9 L1534.3,739.4 L1535.9,810.8 L1537.8,723.3 L1539.6,794.2 L1541.0,713.2 L1542.8,795.0 L1544.1,741.5 L1545.6,820.2 L1547.0,749.8 L1548.7,798.0 L1550.5,734.7 L1552.2,800.2 L1553.5,684.2 L1555.4,813.1 L1557.2,711.3 L1558.8,785.8 L1560.6,722.9 L1562.1,802.0 L1563.5,720.1 L1564.9,794.4 L1566.6,700.0 L1566.6,520.7 L1568.8,520.7 L1571.5,590.0 L1573.4,625.0 L1575.0,660.0 L1577.0,700.0 L1577.0,676.4 L1578.5,818.0 L1579.9,677.3 L1581.5,817.6 L1583.4,691.3 L1585.3,818.5 L1586.7,748.5 L1588.4,814.7 L1589.7,728.0 L1591.5,796.3 L1592.9,731.4 L1594.8,803.2 L1596.4,749.5 L1597.7,806.0 L1599.2,766.0 L1601.0,811.7 L1602.8,770.6 L1604.6,823.0 L1606.4,773.6 L1607.8,820.0 L1609.7,806.6 L1611.0,826.9 L1613.0,822.0 L1620.5,824.0 L1620.5,447.0 L1624.0,447.0 L1625.6,532.0 L1629.5,625.0 L1632.5,717.0 L1635.0,735.0 L1635.0,729.6 L1636.3,821.1 L1637.7,755.9 L1639.1,810.6 L1640.5,769.0 L1641.8,820.2 L1643.0,782.3 L1644.2,817.5 L1645.8,801.9 L1647.3,821.9 L1648.6,806.7 L1650.1,826.8 L1653.0,822.0 L1660.0,826.0 L1667.0,826.0 L1667.0,830.0 L1192.0,830.0 Z" fill="#fff" fill-opacity="0.36"/>
<path d="M1192.0,831.5 L1200.0,831.5 L1200.0,1213.0 L1203.0,1213.0 L1205.0,1085.0 L1206.0,1035.0 L1207.6,1005.0 L1210.0,965.0 L1212.0,925.0 L1214.0,895.0 L1217.0,865.0 L1220.0,845.0 L1225.0,836.0 L1227.0,834.6 L1228.4,835.5 L1230.2,834.2 L1231.9,835.2 L1233.4,834.1 L1234.6,833.0 L1235.7,833.0 L1237.3,833.4 L1238.5,832.9 L1240.1,834.7 L1241.7,833.2 L1242.9,833.1 L1244.2,832.8 L1245.6,832.9 L1247.4,834.0 L1248.8,832.7 L1250.6,832.6 L1251.9,832.1 L1253.2,832.6 L1254.6,832.2 L1255.0,832.5 L1255.0,1021.0 L1255.8,1021.0 L1257.0,985.0 L1259.0,945.0 L1261.0,911.0 L1264.0,885.0 L1267.0,865.0 L1270.0,845.0 L1274.0,836.0 L1276.0,833.2 L1277.2,833.5 L1278.5,833.2 L1279.5,834.0 L1280.7,834.9 L1282.2,835.2 L1283.7,835.0 L1285.4,833.9 L1286.6,835.4 L1287.8,834.5 L1289.3,832.7 L1291.0,834.6 L1292.5,834.1 L1294.1,832.6 L1295.5,833.3 L1297.2,833.7 L1298.9,833.1 L1300.6,833.1 L1302.1,832.3 L1303.1,832.1 L1304.4,832.0 L1306.1,832.4 L1307.6,832.3 L1309.1,832.0 L1309.6,832.0 L1309.6,1060.0 L1311.0,1060.0 L1313.6,974.0 L1317.0,928.0 L1320.0,890.0 L1323.0,865.0 L1326.0,846.0 L1330.5,836.0 L1332.5,836.1 L1334.1,834.8 L1335.5,835.2 L1336.6,835.3 L1337.8,833.1 L1339.0,835.0 L1340.2,834.9 L1341.9,834.0 L1343.2,833.8 L1344.8,834.3 L1346.3,833.8 L1347.3,832.6 L1348.6,833.8 L1349.8,833.3 L1350.8,832.2 L1352.0,833.2 L1353.6,833.0 L1354.8,832.6 L1356.2,832.4 L1357.3,832.8 L1358.4,832.8 L1360.2,831.5 L1361.5,832.2 L1363.3,831.6 L1364.5,831.4 L1365.0,831.5 L1365.0,1213.0 L1370.0,1213.0 L1371.0,1177.0 L1372.7,1020.0 L1375.8,943.0 L1378.0,900.0 L1378.0,879.0 L1379.6,836.7 L1381.2,906.5 L1382.5,849.5 L1384.0,911.4 L1385.7,839.9 L1387.5,905.5 L1388.8,835.8 L1390.3,904.5 L1391.7,838.5 L1393.2,898.9 L1394.9,835.6 L1396.7,916.1 L1398.0,854.1 L1399.7,917.2 L1401.1,842.8 L1402.5,919.5 L1404.1,842.4 L1405.6,894.0 L1406.9,837.3 L1408.7,895.6 L1410.5,840.5 L1411.9,905.9 L1413.2,843.4 L1415.1,922.0 L1416.9,849.5 L1418.7,927.5 L1420.4,930.0 L1420.4,1213.0 L1423.5,1213.0 L1425.6,1128.0 L1428.0,1035.0 L1429.6,1005.0 L1432.7,943.0 L1434.5,900.0 L1437.3,866.0 L1440.0,846.0 L1444.0,837.0 L1446.0,836.9 L1447.0,836.8 L1448.4,836.7 L1449.9,834.8 L1451.0,837.0 L1452.1,835.3 L1453.3,834.6 L1454.9,836.6 L1456.1,835.5 L1457.4,835.0 L1458.7,833.8 L1459.8,833.8 L1461.5,834.4 L1462.7,835.3 L1464.5,834.0 L1465.6,833.3 L1466.7,833.6 L1467.8,833.3 L1469.0,833.8 L1470.7,834.0 L1472.0,833.2 L1473.4,833.0 L1474.7,832.5 L1475.8,833.0 L1475.8,1213.0 L1480.4,1213.0 L1482.0,1100.0 L1483.5,1020.0 L1486.5,943.0 L1487.0,943.6 L1488.3,848.5 L1489.9,924.4 L1491.3,841.1 L1492.7,895.8 L1494.2,852.0 L1496.0,903.5 L1497.2,835.0 L1498.9,897.5 L1500.4,843.9 L1501.6,888.8 L1503.5,849.6 L1505.3,914.2 L1506.6,837.2 L1507.9,900.9 L1509.6,853.4 L1511.3,906.6 L1513.1,844.4 L1514.6,887.3 L1516.4,840.1 L1518.2,909.7 L1519.6,838.2 L1521.0,910.7 L1522.7,838.0 L1524.0,908.1 L1525.6,844.1 L1526.9,913.0 L1528.1,842.5 L1529.7,928.6 L1531.3,855.8 L1532.8,902.9 L1534.2,858.2 L1535.9,907.7 L1537.1,848.1 L1538.8,914.1 L1540.2,852.4 L1542.0,907.1 L1543.2,844.7 L1544.7,926.9 L1546.1,856.1 L1547.8,920.5 L1549.1,860.6 L1550.6,934.8 L1551.9,842.3 L1553.6,913.2 L1555.5,849.3 L1556.8,911.0 L1558.3,853.9 L1560.2,909.2 L1561.7,842.6 L1563.6,910.7 L1564.5,1000.0 L1565.0,1069.5 L1566.0,1000.0 L1568.0,965.0 L1571.0,958.6 L1571.0,912.3 L1572.5,861.2 L1574.3,931.5 L1576.2,857.7 L1577.6,897.6 L1579.5,850.4 L1580.7,907.5 L1582.2,842.3 L1583.6,887.5 L1584.8,840.0 L1586.2,908.4 L1587.5,851.1 L1588.9,887.0 L1590.7,847.5 L1592.2,874.7 L1593.7,839.6 L1595.5,874.3 L1597.0,845.7 L1598.2,875.5 L1600.0,842.6 L1601.2,863.4 L1602.4,843.2 L1603.8,872.9 L1605.7,835.9 L1607.0,868.9 L1608.7,833.6 L1610.4,845.7 L1611.8,830.8 L1613.0,836.0 L1620.5,835.0 L1620.5,1213.0 L1623.6,1213.0 L1625.0,1137.0 L1628.0,1005.0 L1629.7,943.0 L1630.0,936.5 L1631.6,855.7 L1632.9,890.7 L1634.4,850.2 L1636.3,881.8 L1637.6,839.6 L1639.2,885.0 L1640.5,842.2 L1642.2,870.8 L1644.0,837.0 L1645.4,851.8 L1646.9,835.3 L1648.1,842.0 L1652.0,837.0 L1667.0,836.0 L1667.0,830.0 L1192.0,830.0 Z" fill="#fffdf0" fill-opacity="0.40"/>
<path d="M1192.0,828.5 L1200.4,828.5 L1200.4,447.0 L1205.5,447.0 L1207.2,505.0 L1209.2,565.0 L1211.5,625.0 L1213.8,685.0 L1214.9,730.0 L1215.8,778.0 L1217.3,800.0 L1219.0,812.0 L1222.0,820.0 L1227.0,824.0 L1228.0,823.9 L1229.1,825.1 L1230.2,824.9 L1231.5,823.4 L1232.9,823.6 L1234.2,823.9 L1235.3,825.1 L1237.0,824.4 L1238.1,825.9 L1239.9,826.0 L1241.2,827.1 L1242.2,826.9 L1243.5,825.4 L1244.6,825.9 L1246.2,825.9 L1247.7,826.9 L1249.0,826.9 L1250.0,826.2 L1251.2,827.3 L1252.5,826.9 L1254.0,827.3 L1255.3,827.8 L1255.5,827.5 L1255.5,557.0 L1258.4,557.0 L1259.9,625.0 L1261.9,685.0 L1264.6,748.0 L1268.3,800.0 L1270.0,812.0 L1273.0,820.0 L1278.0,824.0 L1279.0,823.6 L1280.5,824.8 L1282.2,825.6 L1283.4,826.5 L1284.5,824.9 L1286.1,824.3 L1287.5,824.2 L1289.0,826.4 L1290.5,826.8 L1291.7,826.4 L1293.2,826.3 L1294.6,827.0 L1296.3,826.4 L1297.9,825.8 L1299.4,827.1 L1301.2,827.5 L1302.4,827.0 L1304.0,826.7 L1305.3,827.1 L1306.4,827.2 L1308.0,827.5 L1309.2,827.9 L1309.6,828.0 L1309.6,575.0 L1311.0,575.0 L1311.0,514.0 L1313.8,514.0 L1314.4,565.0 L1316.6,625.0 L1318.7,685.0 L1320.3,730.0 L1322.0,778.0 L1323.8,800.0 L1325.5,812.0 L1328.5,820.0 L1333.5,824.0 L1334.5,823.0 L1335.9,824.8 L1337.6,826.0 L1339.3,824.4 L1340.6,824.9 L1342.3,826.8 L1343.4,824.8 L1344.6,825.1 L1346.0,826.2 L1347.2,825.0 L1348.5,826.1 L1350.0,827.5 L1351.5,826.8 L1353.0,827.2 L1354.1,827.7 L1355.7,827.8 L1357.3,827.3 L1358.7,827.2 L1360.2,827.4 L1361.2,827.7 L1362.4,828.0 L1363.4,827.9 L1364.5,828.2 L1365.0,828.5 L1365.0,447.0 L1369.6,447.0 L1370.9,505.0 L1372.8,565.0 L1375.5,625.0 L1377.8,685.0 L1380.0,700.0 L1380.0,718.9 L1381.8,801.6 L1383.1,744.9 L1384.6,815.0 L1385.8,725.6 L1387.7,811.1 L1389.3,754.4 L1390.6,813.5 L1391.9,724.8 L1393.2,823.5 L1395.1,763.8 L1396.4,817.5 L1397.6,776.1 L1399.5,811.6 L1401.2,773.6 L1402.7,821.7 L1404.4,755.3 L1406.2,817.0 L1407.5,735.0 L1409.4,802.9 L1411.2,723.4 L1412.9,816.8 L1414.4,737.0 L1415.7,821.5 L1417.1,736.9 L1418.7,793.0 L1420.4,690.0 L1420.4,447.0 L1425.5,447.0 L1427.1,532.0 L1430.5,625.0 L1432.4,717.0 L1434.1,748.0 L1437.3,800.0 L1439.0,812.0 L1442.0,820.0 L1447.0,824.0 L1448.0,826.2 L1449.8,826.4 L1451.1,823.7 L1452.3,823.8 L1453.4,825.4 L1455.1,826.3 L1456.5,825.8 L1458.2,824.1 L1459.7,826.7 L1461.3,826.4 L1462.7,825.0 L1464.3,825.6 L1466.0,827.2 L1467.3,826.0 L1469.1,826.8 L1470.2,825.8 L1471.3,827.3 L1473.0,826.2 L1474.6,827.6 L1475.8,827.0 L1475.8,447.0 L1480.5,447.0 L1482.6,532.0 L1485.5,625.0 L1487.7,700.0 L1490.0,715.0 L1490.0,699.0 L1491.6,817.8 L1492.8,712.3 L1494.4,812.0 L1496.3,763.9 L1498.1,811.5 L1499.5,781.2 L1500.9,822.2 L1502.5,778.7 L1504.0,823.2 L1505.8,768.9 L1507.3,813.3 L1509.2,756.0 L1511.0,812.3 L1512.6,743.7 L1513.8,813.0 L1515.1,763.3 L1516.9,818.9 L1518.4,726.4 L1520.0,814.3 L1521.6,730.0 L1523.3,819.6 L1524.9,741.1 L1526.3,800.2 L1527.8,725.2 L1529.6,797.9 L1531.1,728.9 L1532.6,809.9 L1534.3,739.4 L1535.9,810.8 L1537.8,723.3 L1539.6,794.2 L1541.0,713.2 L1542.8,795.0 L1544.1,741.5 L1545.6,820.2 L1547.0,749.8 L1548.7,798.0 L1550.5,734.7 L1552.2,800.2 L1553.5,684.2 L1555.4,813.1 L1557.2,711.3 L1558.8,785.8 L1560.6,722.9 L1562.1,802.0 L1563.5,720.1 L1564.9,794.4 L1566.6,700.0 L1566.6,520.7 L1568.8,520.7 L1571.5,590.0 L1573.4,625.0 L1575.0,660.0 L1577.0,700.0 L1577.0,676.4 L1578.5,818.0 L1579.9,677.3 L1581.5,817.6 L1583.4,691.3 L1585.3,818.5 L1586.7,748.5 L1588.4,814.7 L1589.7,728.0 L1591.5,796.3 L1592.9,731.4 L1594.8,803.2 L1596.4,749.5 L1597.7,806.0 L1599.2,766.0 L1601.0,811.7 L1602.8,770.6 L1604.6,823.0 L1606.4,773.6 L1607.8,820.0 L1609.7,806.6 L1611.0,826.9 L1613.0,822.0 L1620.5,824.0 L1620.5,447.0 L1624.0,447.0 L1625.6,532.0 L1629.5,625.0 L1632.5,717.0 L1635.0,735.0 L1635.0,729.6 L1636.3,821.1 L1637.7,755.9 L1639.1,810.6 L1640.5,769.0 L1641.8,820.2 L1643.0,782.3 L1644.2,817.5 L1645.8,801.9 L1647.3,821.9 L1648.6,806.7 L1650.1,826.8 L1653.0,822.0 L1660.0,826.0 L1667.0,826.0" fill="none" stroke="#fff" stroke-opacity="0.7" stroke-width="1.3" stroke-linejoin="bevel"/>
<path d="M1192.0,831.5 L1200.0,831.5 L1200.0,1213.0 L1203.0,1213.0 L1205.0,1085.0 L1206.0,1035.0 L1207.6,1005.0 L1210.0,965.0 L1212.0,925.0 L1214.0,895.0 L1217.0,865.0 L1220.0,845.0 L1225.0,836.0 L1227.0,834.6 L1228.4,835.5 L1230.2,834.2 L1231.9,835.2 L1233.4,834.1 L1234.6,833.0 L1235.7,833.0 L1237.3,833.4 L1238.5,832.9 L1240.1,834.7 L1241.7,833.2 L1242.9,833.1 L1244.2,832.8 L1245.6,832.9 L1247.4,834.0 L1248.8,832.7 L1250.6,832.6 L1251.9,832.1 L1253.2,832.6 L1254.6,832.2 L1255.0,832.5 L1255.0,1021.0 L1255.8,1021.0 L1257.0,985.0 L1259.0,945.0 L1261.0,911.0 L1264.0,885.0 L1267.0,865.0 L1270.0,845.0 L1274.0,836.0 L1276.0,833.2 L1277.2,833.5 L1278.5,833.2 L1279.5,834.0 L1280.7,834.9 L1282.2,835.2 L1283.7,835.0 L1285.4,833.9 L1286.6,835.4 L1287.8,834.5 L1289.3,832.7 L1291.0,834.6 L1292.5,834.1 L1294.1,832.6 L1295.5,833.3 L1297.2,833.7 L1298.9,833.1 L1300.6,833.1 L1302.1,832.3 L1303.1,832.1 L1304.4,832.0 L1306.1,832.4 L1307.6,832.3 L1309.1,832.0 L1309.6,832.0 L1309.6,1060.0 L1311.0,1060.0 L1313.6,974.0 L1317.0,928.0 L1320.0,890.0 L1323.0,865.0 L1326.0,846.0 L1330.5,836.0 L1332.5,836.1 L1334.1,834.8 L1335.5,835.2 L1336.6,835.3 L1337.8,833.1 L1339.0,835.0 L1340.2,834.9 L1341.9,834.0 L1343.2,833.8 L1344.8,834.3 L1346.3,833.8 L1347.3,832.6 L1348.6,833.8 L1349.8,833.3 L1350.8,832.2 L1352.0,833.2 L1353.6,833.0 L1354.8,832.6 L1356.2,832.4 L1357.3,832.8 L1358.4,832.8 L1360.2,831.5 L1361.5,832.2 L1363.3,831.6 L1364.5,831.4 L1365.0,831.5 L1365.0,1213.0 L1370.0,1213.0 L1371.0,1177.0 L1372.7,1020.0 L1375.8,943.0 L1378.0,900.0 L1378.0,879.0 L1379.6,836.7 L1381.2,906.5 L1382.5,849.5 L1384.0,911.4 L1385.7,839.9 L1387.5,905.5 L1388.8,835.8 L1390.3,904.5 L1391.7,838.5 L1393.2,898.9 L1394.9,835.6 L1396.7,916.1 L1398.0,854.1 L1399.7,917.2 L1401.1,842.8 L1402.5,919.5 L1404.1,842.4 L1405.6,894.0 L1406.9,837.3 L1408.7,895.6 L1410.5,840.5 L1411.9,905.9 L1413.2,843.4 L1415.1,922.0 L1416.9,849.5 L1418.7,927.5 L1420.4,930.0 L1420.4,1213.0 L1423.5,1213.0 L1425.6,1128.0 L1428.0,1035.0 L1429.6,1005.0 L1432.7,943.0 L1434.5,900.0 L1437.3,866.0 L1440.0,846.0 L1444.0,837.0 L1446.0,836.9 L1447.0,836.8 L1448.4,836.7 L1449.9,834.8 L1451.0,837.0 L1452.1,835.3 L1453.3,834.6 L1454.9,836.6 L1456.1,835.5 L1457.4,835.0 L1458.7,833.8 L1459.8,833.8 L1461.5,834.4 L1462.7,835.3 L1464.5,834.0 L1465.6,833.3 L1466.7,833.6 L1467.8,833.3 L1469.0,833.8 L1470.7,834.0 L1472.0,833.2 L1473.4,833.0 L1474.7,832.5 L1475.8,833.0 L1475.8,1213.0 L1480.4,1213.0 L1482.0,1100.0 L1483.5,1020.0 L1486.5,943.0 L1487.0,943.6 L1488.3,848.5 L1489.9,924.4 L1491.3,841.1 L1492.7,895.8 L1494.2,852.0 L1496.0,903.5 L1497.2,835.0 L1498.9,897.5 L1500.4,843.9 L1501.6,888.8 L1503.5,849.6 L1505.3,914.2 L1506.6,837.2 L1507.9,900.9 L1509.6,853.4 L1511.3,906.6 L1513.1,844.4 L1514.6,887.3 L1516.4,840.1 L1518.2,909.7 L1519.6,838.2 L1521.0,910.7 L1522.7,838.0 L1524.0,908.1 L1525.6,844.1 L1526.9,913.0 L1528.1,842.5 L1529.7,928.6 L1531.3,855.8 L1532.8,902.9 L1534.2,858.2 L1535.9,907.7 L1537.1,848.1 L1538.8,914.1 L1540.2,852.4 L1542.0,907.1 L1543.2,844.7 L1544.7,926.9 L1546.1,856.1 L1547.8,920.5 L1549.1,860.6 L1550.6,934.8 L1551.9,842.3 L1553.6,913.2 L1555.5,849.3 L1556.8,911.0 L1558.3,853.9 L1560.2,909.2 L1561.7,842.6 L1563.6,910.7 L1564.5,1000.0 L1565.0,1069.5 L1566.0,1000.0 L1568.0,965.0 L1571.0,958.6 L1571.0,912.3 L1572.5,861.2 L1574.3,931.5 L1576.2,857.7 L1577.6,897.6 L1579.5,850.4 L1580.7,907.5 L1582.2,842.3 L1583.6,887.5 L1584.8,840.0 L1586.2,908.4 L1587.5,851.1 L1588.9,887.0 L1590.7,847.5 L1592.2,874.7 L1593.7,839.6 L1595.5,874.3 L1597.0,845.7 L1598.2,875.5 L1600.0,842.6 L1601.2,863.4 L1602.4,843.2 L1603.8,872.9 L1605.7,835.9 L1607.0,868.9 L1608.7,833.6 L1610.4,845.7 L1611.8,830.8 L1613.0,836.0 L1620.5,835.0 L1620.5,1213.0 L1623.6,1213.0 L1625.0,1137.0 L1628.0,1005.0 L1629.7,943.0 L1630.0,936.5 L1631.6,855.7 L1632.9,890.7 L1634.4,850.2 L1636.3,881.8 L1637.6,839.6 L1639.2,885.0 L1640.5,842.2 L1642.2,870.8 L1644.0,837.0 L1645.4,851.8 L1646.9,835.3 L1648.1,842.0 L1652.0,837.0 L1667.0,836.0" fill="none" stroke="#fffdf0" stroke-opacity="0.65" stroke-width="1.3" stroke-linejoin="bevel"/>
<path d="M1204.6,447.0 L1206.0,562.0 M1369.2,447.0 L1370.6,562.0 M1424.6,447.0 L1426.0,562.0 M1480.0,447.0 L1481.4,562.0 M1624.7,447.0 L1626.1,562.0" fill="none" stroke="#fff" stroke-opacity="0.5" stroke-width="1"/>
<rect x="1520.5" y="447" width="13.5" height="766" fill="url(#ph)"/>
</g>
<path d="M1192,446 H1667" stroke="#3a1a1a" stroke-width="2"/>
<path d="M1192,447.5 H1667" stroke="#cf8080" stroke-width="1"/>
<path d="M1192.5,447 V829" stroke="#9a9a9a" stroke-width="1"/>
<path d="M1192.5,831 V1213" stroke="#8a7a3a" stroke-width="1"/>
</svg>
<svg style="position:absolute;left:1670.0px;top:436.0px" width="40.0" height="790.0" viewBox="0 0 40.0 790.0">
<path d="M20,7 L32.5,20 V621.5 L20,633.5 L7.5,621.5 V20 Z" fill="#171717" stroke="#5a5a5a" stroke-width="1.2"/>
<path d="M20,11 L27,19.5 H13 Z" fill="#7c7c7c"/><path d="M20,630 L27,621.5 H13 Z" fill="#7c7c7c"/>
<rect x="12.5" y="26" width="15" height="588" rx="7.5" fill="#a2a2a2"/>
<rect x="11" y="652" width="18.5" height="14.5" rx="2" fill="#e4e4e4"/><path d="M15,652 V649.5 A5.2,5.2 0 0 1 25.4,649.5 V652" fill="none" stroke="#e4e4e4" stroke-width="2.2"/>
<circle cx="17.8" cy="690.5" r="7.8" fill="none" stroke="#ececec" stroke-width="2"/><path d="M23.6,696.3 L30,702.7" stroke="#ececec" stroke-width="2.4"/>
<path d="M13.8,690.5 H21.8 M17.8,686.5 V694.5" stroke="#ececec" stroke-width="2"/>
<circle cx="17.8" cy="727.5" r="7.8" fill="none" stroke="#5c5c5c" stroke-width="2"/><path d="M23.6,733.3 L30,739.7" stroke="#5c5c5c" stroke-width="2.4"/>
<path d="M13.8,727.5 H21.8" stroke="#5c5c5c" stroke-width="2"/>
<circle cx="17.8" cy="765.0" r="7.8" fill="none" stroke="#5c5c5c" stroke-width="2"/><path d="M23.6,770.8 L30,777.2" stroke="#5c5c5c" stroke-width="2.4"/>
<circle cx="17.8" cy="765.0" r="3" fill="#5c5c5c"/>
</svg>
<div style="position:absolute;left:1744.0px;top:672.1px;font-size:18.0px;line-height:18.0px;color:#d2d2d2;white-space:nowrap;transform:scaleX(0.9744);transform-origin:0 0;">WAV</div>
<div class="btn" style="left:17px;top:1251px;width:1001px;height:32px"></div>
<div class="btn" style="left:1040.5px;top:1251px;width:692px;height:32px"></div>
<svg style="position:absolute;left:497.0px;top:1255.0px" width="40.0" height="24.0" viewBox="0 0 40.0 24.0">
<path d="M14.6,5.5 L8.2,11.8 L14.6,18 M25.6,5.5 L32,11.8 L25.6,18" fill="none" stroke="#ececec" stroke-width="2.4"/>
</svg>
<svg style="position:absolute;left:1366.0px;top:1255.0px" width="40.0" height="24.0" viewBox="0 0 40.0 24.0">
<path d="M14.6,5.5 L8.2,11.8 L14.6,18 M25.6,5.5 L32,11.8 L25.6,18" fill="none" stroke="#ececec" stroke-width="2.4"/>
</svg>
<svg style="position:absolute;left:1776.0px;top:1276.0px" width="22.0" height="22.0" viewBox="0 0 22.0 22.0">
<path d="M21,1 V21 H1 Z" fill="#111"/>
</svg>
<div style="position:absolute;left:0.0px;top:1298.0px;width:1800.0px;height:2.0px;background:#141414;"></div>
</body></html>
